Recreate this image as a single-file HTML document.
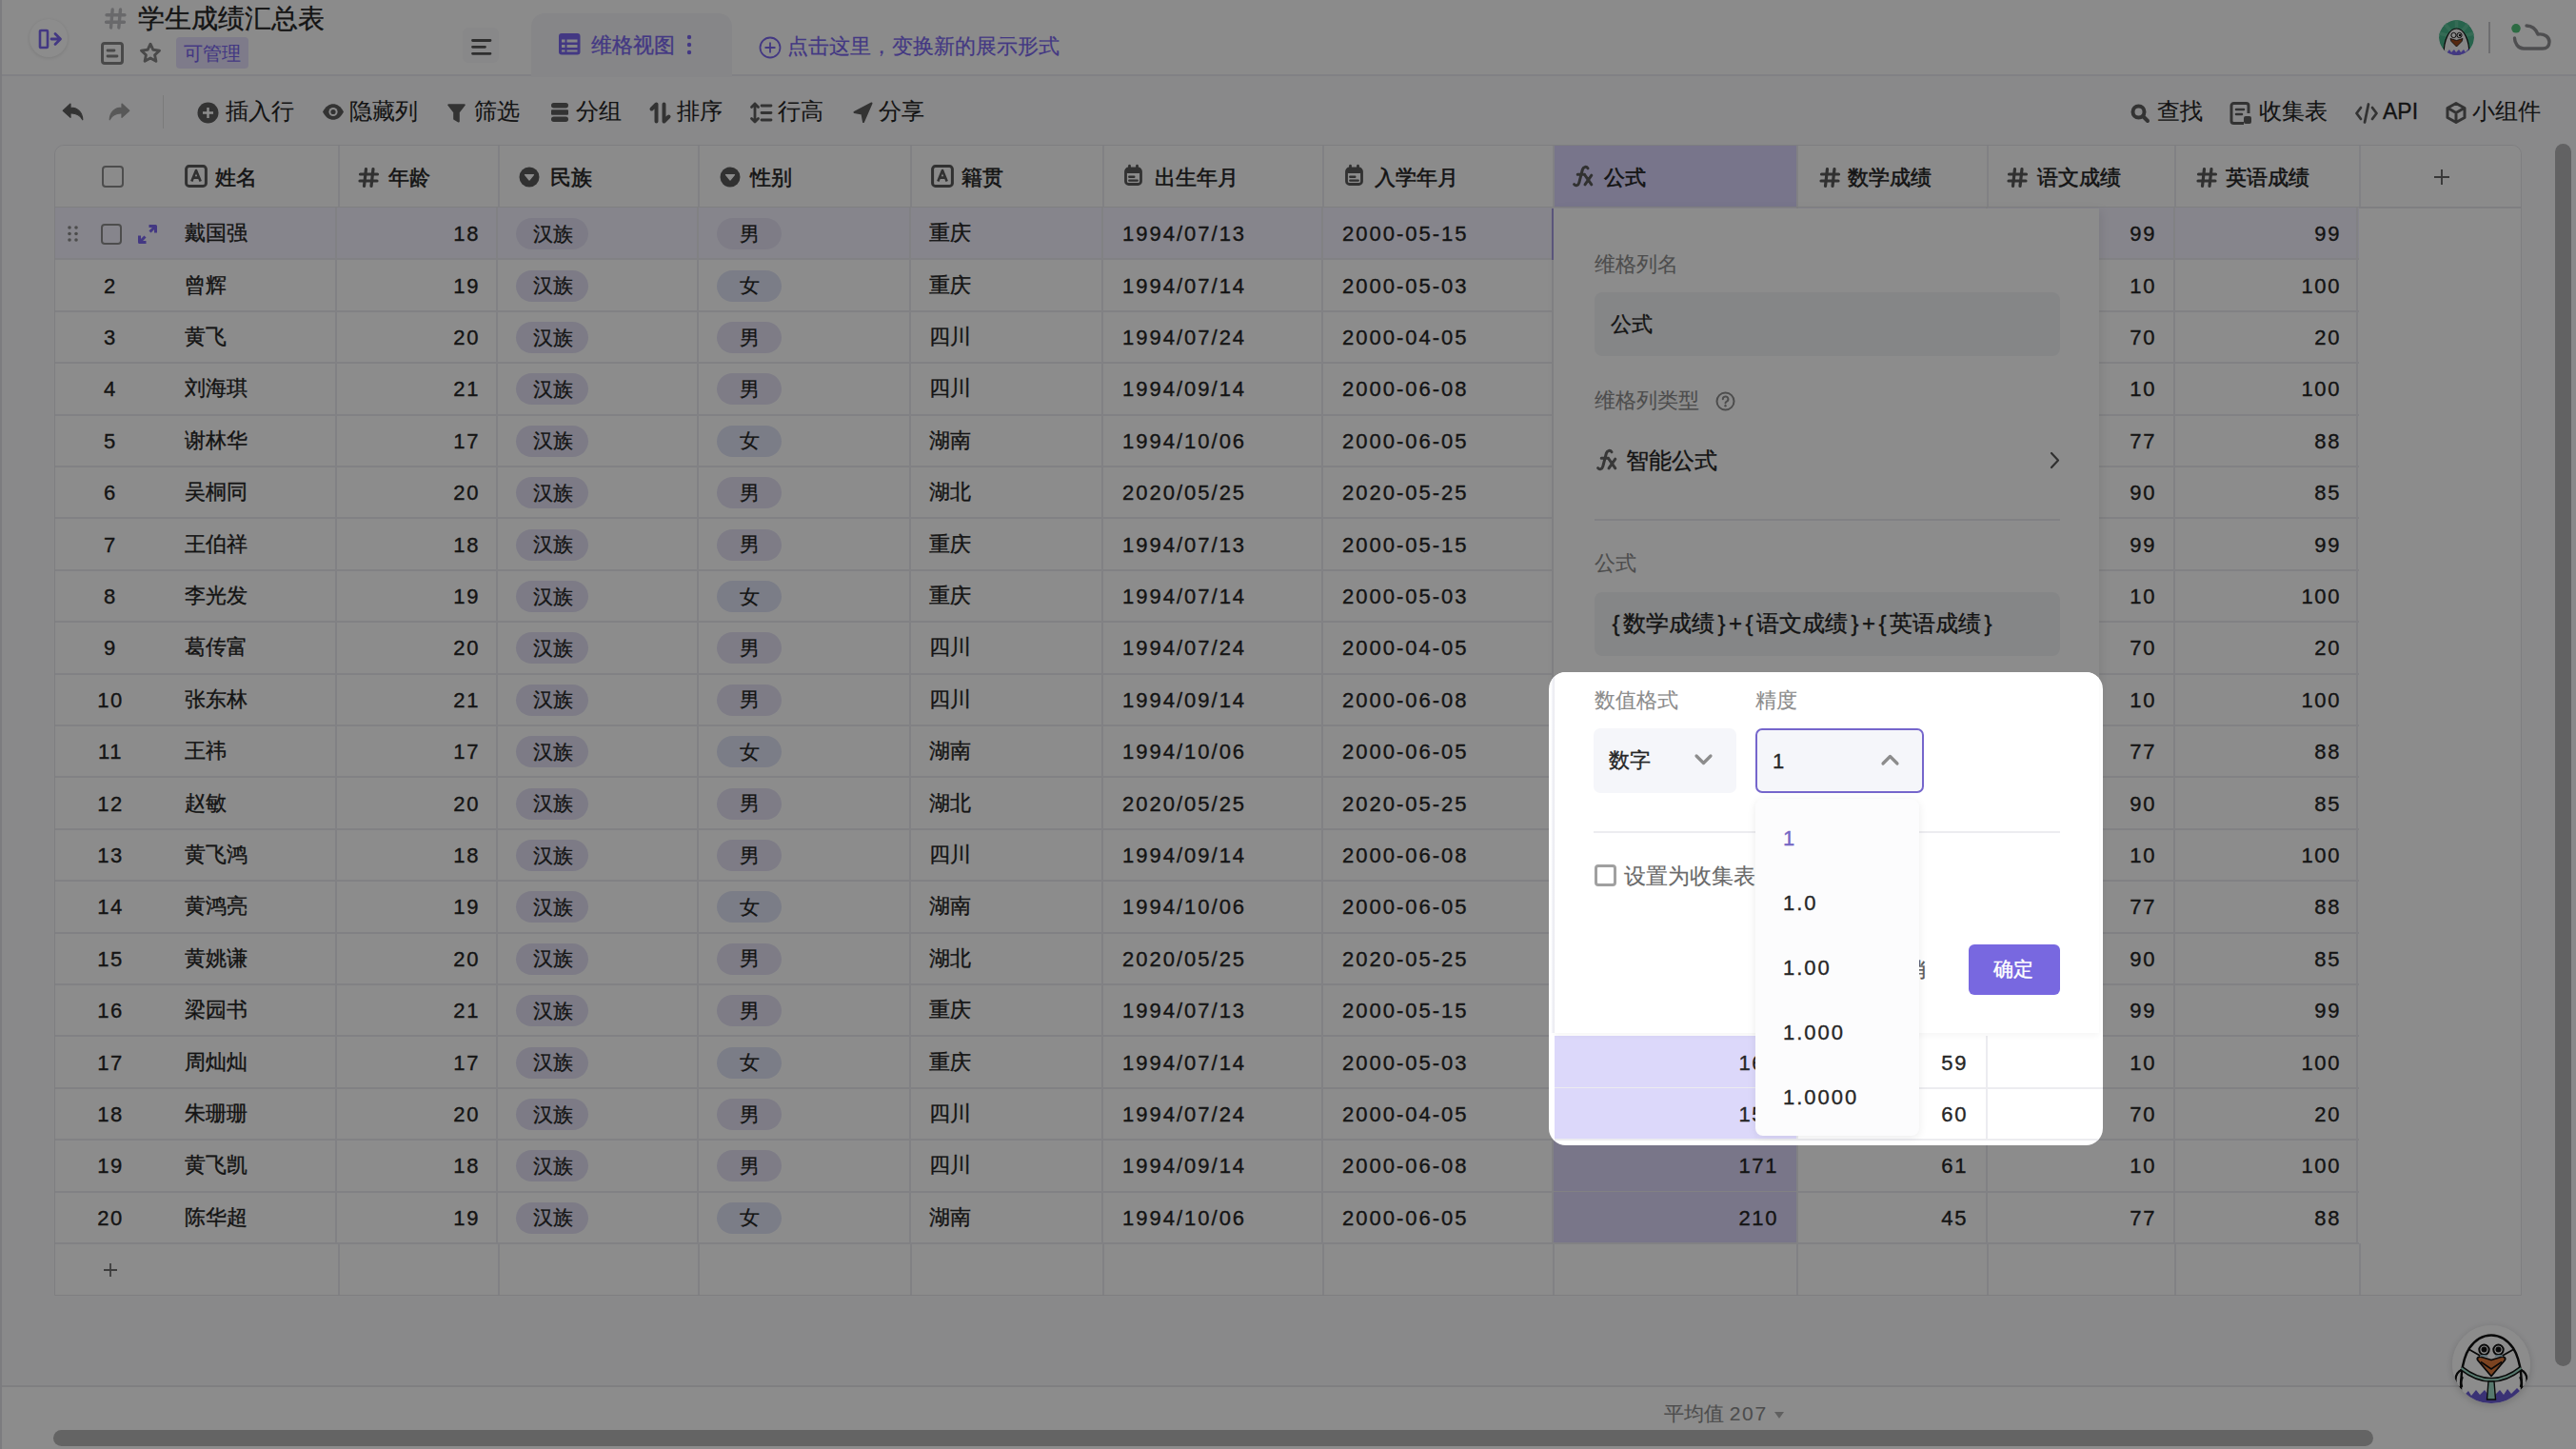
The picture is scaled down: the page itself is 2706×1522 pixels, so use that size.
<!DOCTYPE html><html><head><meta charset="utf-8"><style>
*{margin:0;padding:0;box-sizing:border-box}
html,body{width:2706px;height:1522px;overflow:hidden;background:#fafafc;font-family:"Liberation Sans",sans-serif;color:#262626}
.a{position:absolute}
.t{position:absolute;white-space:nowrap;line-height:1;-webkit-text-stroke-width:0.35px}
.num{letter-spacing:1.6px;transform:translateY(1.3px)}
.dt{letter-spacing:2.0px;transform:translateY(1.3px)}
.dd{letter-spacing:2.0px;transform:translateY(1.3px)}
.br{display:inline-block;width:15px;text-align:center}
.pl{display:inline-block;width:14px;text-align:center}
svg{position:absolute;overflow:visible}
</style></head><body>
<div class="a" style="left:0;top:0;width:2706px;height:80px;background:#fefefe;border-bottom:2px solid #ebebf0"></div>
<div class="a" style="left:0;top:0;width:2px;height:1522px;background:#e2e2e8"></div>
<div class="a" style="left:31px;top:20px;width:40px;height:40px;border-radius:50%;background:#fff;box-shadow:0 1px 4px rgba(0,0,0,.12)"></div>
<svg style="left:41px;top:31px" width="24" height="20" viewBox="0 0 24 20"><rect x="1" y="1" width="8" height="18" rx="1" fill="none" stroke="#7b67ee" stroke-width="2.6"/><path d="M13 10h9M17 4.5l5.5 5.5-5.5 5.5" fill="none" stroke="#7b67ee" stroke-width="2.8" stroke-linecap="round" stroke-linejoin="round"/></svg>
<svg style="left:110px;top:8px" width="23" height="23" viewBox="0 0 23 23"><path d="M8.2 2L6.5 21M16.5 2l-1.7 19M2 7.8h19M1.5 15.2h19" stroke="#c0c0c4" stroke-width="3.4" stroke-linecap="round"/></svg>
<div class="t" style="left:145px;top:5px;font-size:27.6px;line-height:30px;color:#262626;-webkit-text-stroke-width:0.35px">学生成绩汇总表</div>
<svg style="left:106px;top:44px" width="24" height="24" viewBox="0 0 24 24"><rect x="1.5" y="1.5" width="21" height="21" rx="2.5" fill="none" stroke="#858585" stroke-width="3"/><path d="M7 9h7M7 15h10" stroke="#858585" stroke-width="2.8" stroke-linecap="round"/></svg>
<svg style="left:146px;top:44px" width="24" height="24" viewBox="0 0 24 24"><path d="M12 2.2l2.9 6.1 6.6.8-4.9 4.6 1.3 6.6L12 17l-5.9 3.3 1.3-6.6-4.9-4.6 6.6-.8z" fill="none" stroke="#858585" stroke-width="2.9" stroke-linejoin="round"/></svg>
<div class="a" style="left:185px;top:39px;width:76px;height:33px;border-radius:4px;background:#e5e1fc"></div>
<div class="t" style="left:193px;top:44px;font-size:20px;line-height:24px;color:#7b67ee;-webkit-text-stroke-width:0.1px">可管理</div>
<div class="a" style="left:486px;top:29px;width:38px;height:37px;border-radius:6px;background:#f7f7f9"></div>
<svg style="left:495px;top:41px" width="22" height="17" viewBox="0 0 22 17"><path d="M1.5 1.5h18.5M1.5 8.3h13M1.5 15.3h18.5" stroke="#555" stroke-width="2.8" stroke-linecap="round"/></svg>
<div class="a" style="left:558px;top:14px;width:211px;height:67px;border-radius:14px 14px 0 0;background:#f4f4f8"></div>
<svg style="left:587px;top:35px" width="23" height="23" viewBox="0 0 23 23"><rect x="0" y="0" width="22.5" height="22.5" rx="3" fill="#7b67ee"/><g fill="#f4f4f8"><rect x="3" y="6.5" width="3.5" height="3"/><rect x="3" y="12" width="3.5" height="3"/><rect x="3" y="17.5" width="3.5" height="2"/><rect x="8.5" y="6.5" width="11" height="3"/><rect x="8.5" y="12" width="11" height="3"/><rect x="8.5" y="17.5" width="11" height="2"/></g></svg>
<div class="t" style="left:621px;top:36px;font-size:22px;line-height:24px;color:#7b67ee">维格视图</div>
<svg style="left:721px;top:36px" width="6" height="22" viewBox="0 0 6 22"><circle cx="3" cy="3" r="2.2" fill="#7b67ee"/><circle cx="3" cy="11" r="2.2" fill="#7b67ee"/><circle cx="3" cy="19" r="2.2" fill="#7b67ee"/></svg>
<svg style="left:797px;top:38px" width="24" height="24" viewBox="0 0 24 24"><circle cx="12" cy="12" r="10.5" fill="none" stroke="#7b67ee" stroke-width="1.8"/><path d="M12 6.5v11M6.5 12h11" stroke="#7b67ee" stroke-width="1.8"/></svg>
<div class="t" style="left:827px;top:37px;font-size:22.1px;line-height:24px;color:#7b67ee;-webkit-text-stroke-width:0.2px">点击这里，变换新的展示形式</div>
<svg style="left:2562px;top:21px" width="37" height="37" viewBox="0 0 37 37"><defs><clipPath id="avc"><circle cx="18.5" cy="18.5" r="18.5"/></clipPath></defs><g clip-path="url(#avc)"><circle cx="18.5" cy="18.5" r="18.5" fill="#48b58a"/><g stroke="#62c49c" stroke-width="3.5"><path d="M18.5 18.5L18.5 0M18.5 18.5L31 4M18.5 18.5L37 14M18.5 18.5L6 4M18.5 18.5L0 14"/></g><path d="M5 37C5 20 11 9 18.5 9S32 20 32 37z" fill="#f4f4f4" stroke="#111" stroke-width="1.2"/><path d="M3 37l3-5 2 3 3-4 2 3 3-3 2 3 3-3 2 3 3-3 2 3 3-4 2 3 3-2v7z" fill="#7b67ee"/><circle cx="15.5" cy="16" r="2.6" fill="#fff" stroke="#111" stroke-width="1"/><circle cx="21.5" cy="16" r="2.6" fill="#fff" stroke="#111" stroke-width="1"/><circle cx="22" cy="16" r="1.2" fill="#111"/><path d="M12 19.5l6.5 2 6.5-2 -1 3-5.5 5.5-5.5-5.5z" fill="#9b4a1c" stroke="#111" stroke-width="0.8"/></g></svg>
<div class="a" style="left:2614px;top:23px;width:2px;height:33px;background:#c8c8cc"></div>
<svg style="left:2636px;top:20px" width="46" height="36" viewBox="0 0 46 36"><path d="M18 7C24 7 28 11 30 16C37 15 42 19 42 24C42 28.5 39 31 35 31L15 31C9 31 5.5 25 5.5 20" fill="none" stroke="#8e8e92" stroke-width="3.4" stroke-linecap="round" stroke-linejoin="round"/><circle cx="7" cy="9.8" r="4.8" fill="#52c47a"/></svg>
<svg style="left:65px;top:108px" width="23" height="19" viewBox="0 0 23 19"><path d="M9 1L1.2 8.2 9 15.4V11c6.5-.3 10.2 1.8 12.8 6.8C21.5 9.5 16.5 5.2 9 5.2z" fill="#5e5e5e" stroke="#5e5e5e" stroke-width="1.2" stroke-linejoin="round"/></svg>
<svg style="left:114px;top:108px" width="23" height="19" viewBox="0 0 23 19"><path d="M14 1l7.8 7.2L14 15.4V11C7.5 10.7 3.8 12.8 1.2 17.8 1.5 9.5 6.5 5.2 14 5.2z" fill="#a0a0a0" stroke="#a0a0a0" stroke-width="1.2" stroke-linejoin="round"/></svg>
<div class="a" style="left:171px;top:100px;width:1px;height:35px;background:#e0e0e0"></div>
<svg style="left:207px;top:107px" width="23" height="23" viewBox="0 0 23 23"><circle cx="11.5" cy="11.5" r="11" fill="#5e5e5e"/><path d="M11.5 6v11M6 11.5h11" stroke="#fff" stroke-width="2.4"/></svg>
<div class="t" style="left:237px;top:104px;font-size:24px;line-height:26px;color:#262626;-webkit-text-stroke-width:0.12px">插入行</div>
<svg style="left:338px;top:108px" width="24" height="19" viewBox="0 0 24 19"><path d="M1 9.5C4 3.5 8 1.2 12 1.2s8 2.3 11 8.3C20 15.5 16 17.8 12 17.8S4 15.5 1 9.5z" fill="#5e5e5e"/><circle cx="12" cy="9.5" r="4.6" fill="#fafafc"/><circle cx="12" cy="9.5" r="2.6" fill="#5e5e5e"/></svg>
<div class="t" style="left:367px;top:104px;font-size:24px;line-height:26px;color:#262626;-webkit-text-stroke-width:0.12px">隐藏列</div>
<svg style="left:470px;top:109px" width="19" height="20" viewBox="0 0 19 20"><path d="M1.2 1.2h16.6l-6 7.6v9.8l-4.6-2.6V8.8z" fill="#5e5e5e" stroke="#5e5e5e" stroke-width="2" stroke-linejoin="round"/></svg>
<div class="t" style="left:498px;top:104px;font-size:24px;line-height:26px;color:#262626;-webkit-text-stroke-width:0.12px">筛选</div>
<svg style="left:579px;top:108px" width="18" height="20" viewBox="0 0 18 20"><rect x="0" y="0" width="18" height="5.5" rx="2.7" fill="#5e5e5e"/><rect x="0" y="7.2" width="18" height="5.5" rx="1" fill="#5e5e5e"/><rect x="0" y="14.5" width="18" height="5.5" rx="2.7" fill="#5e5e5e"/></svg>
<div class="t" style="left:605px;top:104px;font-size:24px;line-height:26px;color:#262626;-webkit-text-stroke-width:0.12px">分组</div>
<svg style="left:682px;top:108px" width="23" height="21" viewBox="0 0 23 21"><path d="M2.5 6.5l5-5v18M20.5 14.5l-5 5v-18" fill="none" stroke="#5e5e5e" stroke-width="4" stroke-linecap="round" stroke-linejoin="round"/></svg>
<div class="t" style="left:711px;top:104px;font-size:24px;line-height:26px;color:#262626;-webkit-text-stroke-width:0.12px">排序</div>
<svg style="left:788px;top:107px" width="23" height="23" viewBox="0 0 23 23"><path d="M5 2v19M1.5 5.5L5 2l3.5 3.5M1.5 17.5L5 21l3.5-3.5M12 4h10M12 11.5h10M12 19h10" fill="none" stroke="#5e5e5e" stroke-width="2.8" stroke-linecap="round" stroke-linejoin="round"/></svg>
<div class="t" style="left:817px;top:104px;font-size:24px;line-height:26px;color:#262626;-webkit-text-stroke-width:0.12px">行高</div>
<svg style="left:896px;top:107px" width="21" height="22" viewBox="0 0 21 22"><path d="M19.5 1.5L1.5 11l8 1.5 1.5 8.5z" fill="#5e5e5e" stroke="#5e5e5e" stroke-width="2" stroke-linejoin="round"/></svg>
<div class="t" style="left:923px;top:104px;font-size:24px;line-height:26px;color:#262626;-webkit-text-stroke-width:0.12px">分享</div>
<svg style="left:2238px;top:109px" width="20" height="20" viewBox="0 0 20 20"><circle cx="8.5" cy="8.5" r="6" fill="none" stroke="#5e5e5e" stroke-width="4"/><path d="M13 13l5 5" stroke="#5e5e5e" stroke-width="4" stroke-linecap="round"/></svg>
<div class="t" style="left:2266px;top:104px;font-size:24px;line-height:26px;color:#262626;-webkit-text-stroke-width:0.12px">查找</div>
<svg style="left:2342px;top:107px" width="24" height="24" viewBox="0 0 24 24"><path d="M20 12V4a2.5 2.5 0 0 0-2.5-2.5h-13A2.5 2.5 0 0 0 2 4v16a2.5 2.5 0 0 0 2.5 2.5H15" fill="none" stroke="#5e5e5e" stroke-width="3"/><path d="M7 8h8M7 13h6" stroke="#5e5e5e" stroke-width="2.6" stroke-linecap="round"/><rect x="15" y="15" width="8" height="8" rx="2" fill="#5e5e5e"/></svg>
<div class="t" style="left:2373px;top:104px;font-size:24px;line-height:26px;color:#262626;-webkit-text-stroke-width:0.12px">收集表</div>
<svg style="left:2474px;top:108px" width="24" height="22" viewBox="0 0 24 22"><path d="M6 5L1.5 11 6 17M18 5l4.5 6L18 17M14 1.5L10 20.5" fill="none" stroke="#5e5e5e" stroke-width="2.8" stroke-linecap="round" stroke-linejoin="round"/></svg>
<div class="t" style="left:2503px;top:105px;font-size:23px;line-height:24px;color:#262626;font-weight:400">API</div>
<svg style="left:2569px;top:107px" width="22" height="23" viewBox="0 0 22 23"><path d="M11 1.5l9 5v10l-9 5-9-5v-10z M2.5 6.5L11 11.5l8.5-5M11 11.5v10" fill="none" stroke="#5e5e5e" stroke-width="3" stroke-linejoin="round"/></svg>
<div class="t" style="left:2597px;top:104px;font-size:24px;line-height:26px;color:#262626;-webkit-text-stroke-width:0.12px">小组件</div>
<div class="a" style="left:57px;top:152px;width:2592px;height:1209px;background:#fff;border:1px solid #e6e6ea;border-radius:10px 10px 0 0"></div>
<div class="a" style="left:58px;top:153px;width:2590px;height:66px;background:#fdfdfd;border-radius:10px 10px 0 0"></div>
<div class="a" style="left:1632px;top:153px;width:256px;height:64px;background:#dad5fd"></div>
<div class="a" style="left:58px;top:217px;width:2590px;height:2px;background:#e8e8ec"></div>
<div class="a" style="left:355px;top:153px;width:2px;height:64px;background:#ececf0"></div>
<div class="a" style="left:523px;top:153px;width:2px;height:64px;background:#ececf0"></div>
<div class="a" style="left:733px;top:153px;width:2px;height:64px;background:#ececf0"></div>
<div class="a" style="left:956px;top:153px;width:2px;height:64px;background:#ececf0"></div>
<div class="a" style="left:1158px;top:153px;width:2px;height:64px;background:#ececf0"></div>
<div class="a" style="left:1389px;top:153px;width:2px;height:64px;background:#ececf0"></div>
<div class="a" style="left:1631px;top:153px;width:2px;height:64px;background:#ececf0"></div>
<div class="a" style="left:1887px;top:153px;width:2px;height:64px;background:#ececf0"></div>
<div class="a" style="left:2087px;top:153px;width:2px;height:64px;background:#ececf0"></div>
<div class="a" style="left:2284px;top:153px;width:2px;height:64px;background:#ececf0"></div>
<div class="a" style="left:2478px;top:153px;width:2px;height:64px;background:#ececf0"></div>
<div class="a" style="left:107px;top:174px;width:23px;height:23px;border:2.5px solid #8c8c8c;border-radius:4px"></div>
<svg style="left:194px;top:173px" width="24" height="24" viewBox="0 0 24 24"><rect x="1.6" y="1.6" width="20.8" height="20.8" rx="3" fill="none" stroke="#5a5a5a" stroke-width="3"/><path d="M7.3 17.5L12 6l4.7 11.5M8.9 13.6h6.2" fill="none" stroke="#5a5a5a" stroke-width="2.6" stroke-linejoin="round"/></svg>
<div class="t" style="left:226px;top:175px;font-size:22px;line-height:24px;-webkit-text-stroke:0.55px #262626;color:#262626">姓名</div>
<svg style="left:377px;top:176px" width="21" height="21" viewBox="0 0 21 21"><path d="M7.5 1.5L5.5 19.5M15 1.5l-2 18M1.5 7h18M1 14h18" stroke="#5a5a5a" stroke-width="3.2" stroke-linecap="round"/></svg>
<div class="t" style="left:408px;top:175px;font-size:22px;line-height:24px;-webkit-text-stroke:0.55px #262626;color:#262626">年龄</div>
<svg style="left:545px;top:175px" width="22" height="22" viewBox="0 0 22 22"><circle cx="11" cy="11" r="10.5" fill="#5a5a5a"/><path d="M6.5 8.5h9L11 14z" fill="#fdfdfd" stroke="#fdfdfd" stroke-width="1.2" stroke-linejoin="round"/></svg>
<div class="t" style="left:578px;top:175px;font-size:22px;line-height:24px;-webkit-text-stroke:0.55px #262626;color:#262626">民族</div>
<svg style="left:756px;top:175px" width="22" height="22" viewBox="0 0 22 22"><circle cx="11" cy="11" r="10.5" fill="#5a5a5a"/><path d="M6.5 8.5h9L11 14z" fill="#fdfdfd" stroke="#fdfdfd" stroke-width="1.2" stroke-linejoin="round"/></svg>
<div class="t" style="left:788px;top:175px;font-size:22px;line-height:24px;-webkit-text-stroke:0.55px #262626;color:#262626">性别</div>
<svg style="left:978px;top:173px" width="24" height="24" viewBox="0 0 24 24"><rect x="1.6" y="1.6" width="20.8" height="20.8" rx="3" fill="none" stroke="#5a5a5a" stroke-width="3"/><path d="M7.3 17.5L12 6l4.7 11.5M8.9 13.6h6.2" fill="none" stroke="#5a5a5a" stroke-width="2.6" stroke-linejoin="round"/></svg>
<div class="t" style="left:1010px;top:175px;font-size:22px;line-height:24px;-webkit-text-stroke:0.55px #262626;color:#262626">籍贯</div>
<svg style="left:1181px;top:173px" width="19" height="22" viewBox="0 0 19 22"><rect x="1.5" y="4" width="16" height="16.5" rx="3" fill="none" stroke="#5a5a5a" stroke-width="2.8"/><rect x="1.5" y="4" width="16" height="5" rx="2" fill="#5a5a5a"/><path d="M5.5 1.2v3.5M13.5 1.2v3.5" stroke="#5a5a5a" stroke-width="2.8" stroke-linecap="round"/><path d="M5.3 12.8h5M5.3 16.6h8.4" stroke="#5a5a5a" stroke-width="2.4" stroke-linecap="round"/></svg>
<div class="t" style="left:1213px;top:175px;font-size:22px;line-height:24px;-webkit-text-stroke:0.55px #262626;color:#262626">出生年月</div>
<svg style="left:1413px;top:173px" width="19" height="22" viewBox="0 0 19 22"><rect x="1.5" y="4" width="16" height="16.5" rx="3" fill="none" stroke="#5a5a5a" stroke-width="2.8"/><rect x="1.5" y="4" width="16" height="5" rx="2" fill="#5a5a5a"/><path d="M5.5 1.2v3.5M13.5 1.2v3.5" stroke="#5a5a5a" stroke-width="2.8" stroke-linecap="round"/><path d="M5.3 12.8h5M5.3 16.6h8.4" stroke="#5a5a5a" stroke-width="2.4" stroke-linecap="round"/></svg>
<div class="t" style="left:1444px;top:175px;font-size:22px;line-height:24px;-webkit-text-stroke:0.55px #262626;color:#262626">入学年月</div>
<svg style="left:1652px;top:173px" width="24" height="24" viewBox="0 0 24 24"><path d="M16 3.8C14.6 1.6 11.3 1.9 10.4 5L6.8 18.8C6 21.8 3.2 22.6 1.6 20.6M5.2 10.2H12.6M13 11.2l6.8 9.6M19.8 11.2l-6.8 9.6" fill="none" stroke="#5a5a5a" stroke-width="3" stroke-linecap="round"/></svg>
<div class="t" style="left:1685px;top:175px;font-size:22px;line-height:24px;-webkit-text-stroke:0.55px #262626;color:#262626">公式</div>
<svg style="left:1912px;top:176px" width="21" height="21" viewBox="0 0 21 21"><path d="M7.5 1.5L5.5 19.5M15 1.5l-2 18M1.5 7h18M1 14h18" stroke="#5a5a5a" stroke-width="3.2" stroke-linecap="round"/></svg>
<div class="t" style="left:1941px;top:175px;font-size:22px;line-height:24px;-webkit-text-stroke:0.55px #262626;color:#262626">数学成绩</div>
<svg style="left:2109px;top:176px" width="21" height="21" viewBox="0 0 21 21"><path d="M7.5 1.5L5.5 19.5M15 1.5l-2 18M1.5 7h18M1 14h18" stroke="#5a5a5a" stroke-width="3.2" stroke-linecap="round"/></svg>
<div class="t" style="left:2140px;top:175px;font-size:22px;line-height:24px;-webkit-text-stroke:0.55px #262626;color:#262626">语文成绩</div>
<svg style="left:2308px;top:176px" width="21" height="21" viewBox="0 0 21 21"><path d="M7.5 1.5L5.5 19.5M15 1.5l-2 18M1.5 7h18M1 14h18" stroke="#5a5a5a" stroke-width="3.2" stroke-linecap="round"/></svg>
<div class="t" style="left:2338px;top:175px;font-size:22px;line-height:24px;-webkit-text-stroke:0.55px #262626;color:#262626">英语成绩</div>
<svg style="left:2557px;top:178px" width="16" height="16" viewBox="0 0 16 16"><path d="M8 0v16M0 8h16" stroke="#666" stroke-width="1.9"/></svg>
<div class="a" style="left:58px;top:218.0px;width:2420px;height:54.4px;background:#f5f3ff"></div>
<div class="a" style="left:58px;top:271.4px;width:2420px;height:2px;background:#ececf0"></div>
<div class="a" style="left:352.0px;top:218.0px;width:2px;height:54.4px;background:#ececf0"></div>
<div class="a" style="left:521.0px;top:218.0px;width:2px;height:54.4px;background:#ececf0"></div>
<div class="a" style="left:731.5px;top:218.0px;width:2px;height:54.4px;background:#ececf0"></div>
<div class="a" style="left:955.0px;top:218.0px;width:2px;height:54.4px;background:#ececf0"></div>
<div class="a" style="left:1157.0px;top:218.0px;width:2px;height:54.4px;background:#ececf0"></div>
<div class="a" style="left:1388.0px;top:218.0px;width:2px;height:54.4px;background:#ececf0"></div>
<div class="a" style="left:1630.0px;top:218.0px;width:2px;height:54.4px;background:#ececf0"></div>
<div class="a" style="left:1887.0px;top:218.0px;width:2px;height:54.4px;background:#ececf0"></div>
<div class="a" style="left:2085.5px;top:218.0px;width:2px;height:54.4px;background:#ececf0"></div>
<div class="a" style="left:2283.0px;top:218.0px;width:2px;height:54.4px;background:#ececf0"></div>
<div class="a" style="left:2475.0px;top:218.0px;width:2px;height:54.4px;background:#ececf0"></div>
<svg style="left:71px;top:237px" width="11" height="17" viewBox="0 0 11 17"><g fill="#8c8c8c"><circle cx="2" cy="2" r="1.8"/><circle cx="9" cy="2" r="1.8"/><circle cx="2" cy="8.5" r="1.8"/><circle cx="9" cy="8.5" r="1.8"/><circle cx="2" cy="15" r="1.8"/><circle cx="9" cy="15" r="1.8"/></g></svg>
<div class="a" style="left:106px;top:235px;width:22px;height:22px;border:2.5px solid #8c8c8c;border-radius:4px"></div>
<svg style="left:145px;top:236px" width="20" height="20" viewBox="0 0 20 20"><path d="M11.5 1.5h7v7M18.5 1.5l-6 6M8.5 18.5h-7v-7M1.5 18.5l6-6" fill="none" stroke="#7b67ee" stroke-width="3" stroke-linejoin="round"/></svg>
<div class="t" style="left:194px;top:233.2px;font-size:22px;line-height:24px">戴国强</div>
<div class="t num" style="left:400px;top:233.2px;width:104px;text-align:right;font-size:22px;line-height:24px">18</div>
<div class="a" style="left:542px;top:229.2px;width:76px;height:33px;border-radius:17px;background:#e3e1f5"></div>
<div class="t" style="left:559.5px;top:233.7px;font-size:20.5px;line-height:24px;-webkit-text-stroke-width:0.25px">汉族</div>
<div class="a" style="left:753px;top:229.2px;width:68px;height:33px;border-radius:17px;background:#e5e2f5"></div>
<div class="t" style="left:777px;top:233.7px;font-size:20.5px;line-height:24px;-webkit-text-stroke-width:0.25px">男</div>
<div class="t" style="left:976px;top:233.2px;font-size:22px;line-height:24px">重庆</div>
<div class="t dt" style="left:1179px;top:233.2px;font-size:22px;line-height:24px">1994/07/13</div>
<div class="t dt" style="left:1410px;top:233.2px;font-size:22px;line-height:24px">2000-05-15</div>
<div class="t num" style="left:2100px;top:233.2px;width:165px;text-align:right;font-size:22px;line-height:24px">99</div>
<div class="t num" style="left:2290px;top:233.2px;width:169px;text-align:right;font-size:22px;line-height:24px">99</div>
<div class="a" style="left:58px;top:325.8px;width:2420px;height:2px;background:#ececf0"></div>
<div class="a" style="left:352.0px;top:272.4px;width:2px;height:54.4px;background:#ececf0"></div>
<div class="a" style="left:521.0px;top:272.4px;width:2px;height:54.4px;background:#ececf0"></div>
<div class="a" style="left:731.5px;top:272.4px;width:2px;height:54.4px;background:#ececf0"></div>
<div class="a" style="left:955.0px;top:272.4px;width:2px;height:54.4px;background:#ececf0"></div>
<div class="a" style="left:1157.0px;top:272.4px;width:2px;height:54.4px;background:#ececf0"></div>
<div class="a" style="left:1388.0px;top:272.4px;width:2px;height:54.4px;background:#ececf0"></div>
<div class="a" style="left:1630.0px;top:272.4px;width:2px;height:54.4px;background:#ececf0"></div>
<div class="a" style="left:1887.0px;top:272.4px;width:2px;height:54.4px;background:#ececf0"></div>
<div class="a" style="left:2085.5px;top:272.4px;width:2px;height:54.4px;background:#ececf0"></div>
<div class="a" style="left:2283.0px;top:272.4px;width:2px;height:54.4px;background:#ececf0"></div>
<div class="a" style="left:2475.0px;top:272.4px;width:2px;height:54.4px;background:#ececf0"></div>
<div class="t num" style="left:56px;top:287.6px;width:120px;text-align:center;font-size:22px;line-height:24px">2</div>
<div class="t" style="left:194px;top:287.6px;font-size:22px;line-height:24px">曾辉</div>
<div class="t num" style="left:400px;top:287.6px;width:104px;text-align:right;font-size:22px;line-height:24px">19</div>
<div class="a" style="left:542px;top:283.6px;width:76px;height:33px;border-radius:17px;background:#e3e1f5"></div>
<div class="t" style="left:559.5px;top:288.1px;font-size:20.5px;line-height:24px;-webkit-text-stroke-width:0.25px">汉族</div>
<div class="a" style="left:753px;top:283.6px;width:68px;height:33px;border-radius:17px;background:#e0e4f6"></div>
<div class="t" style="left:777px;top:288.1px;font-size:20.5px;line-height:24px;-webkit-text-stroke-width:0.25px">女</div>
<div class="t" style="left:976px;top:287.6px;font-size:22px;line-height:24px">重庆</div>
<div class="t dt" style="left:1179px;top:287.6px;font-size:22px;line-height:24px">1994/07/14</div>
<div class="t dt" style="left:1410px;top:287.6px;font-size:22px;line-height:24px">2000-05-03</div>
<div class="t num" style="left:2100px;top:287.6px;width:165px;text-align:right;font-size:22px;line-height:24px">10</div>
<div class="t num" style="left:2290px;top:287.6px;width:169px;text-align:right;font-size:22px;line-height:24px">100</div>
<div class="a" style="left:58px;top:380.2px;width:2420px;height:2px;background:#ececf0"></div>
<div class="a" style="left:352.0px;top:326.8px;width:2px;height:54.4px;background:#ececf0"></div>
<div class="a" style="left:521.0px;top:326.8px;width:2px;height:54.4px;background:#ececf0"></div>
<div class="a" style="left:731.5px;top:326.8px;width:2px;height:54.4px;background:#ececf0"></div>
<div class="a" style="left:955.0px;top:326.8px;width:2px;height:54.4px;background:#ececf0"></div>
<div class="a" style="left:1157.0px;top:326.8px;width:2px;height:54.4px;background:#ececf0"></div>
<div class="a" style="left:1388.0px;top:326.8px;width:2px;height:54.4px;background:#ececf0"></div>
<div class="a" style="left:1630.0px;top:326.8px;width:2px;height:54.4px;background:#ececf0"></div>
<div class="a" style="left:1887.0px;top:326.8px;width:2px;height:54.4px;background:#ececf0"></div>
<div class="a" style="left:2085.5px;top:326.8px;width:2px;height:54.4px;background:#ececf0"></div>
<div class="a" style="left:2283.0px;top:326.8px;width:2px;height:54.4px;background:#ececf0"></div>
<div class="a" style="left:2475.0px;top:326.8px;width:2px;height:54.4px;background:#ececf0"></div>
<div class="t num" style="left:56px;top:342.0px;width:120px;text-align:center;font-size:22px;line-height:24px">3</div>
<div class="t" style="left:194px;top:342.0px;font-size:22px;line-height:24px">黄飞</div>
<div class="t num" style="left:400px;top:342.0px;width:104px;text-align:right;font-size:22px;line-height:24px">20</div>
<div class="a" style="left:542px;top:338.0px;width:76px;height:33px;border-radius:17px;background:#e3e1f5"></div>
<div class="t" style="left:559.5px;top:342.5px;font-size:20.5px;line-height:24px;-webkit-text-stroke-width:0.25px">汉族</div>
<div class="a" style="left:753px;top:338.0px;width:68px;height:33px;border-radius:17px;background:#e5e2f5"></div>
<div class="t" style="left:777px;top:342.5px;font-size:20.5px;line-height:24px;-webkit-text-stroke-width:0.25px">男</div>
<div class="t" style="left:976px;top:342.0px;font-size:22px;line-height:24px">四川</div>
<div class="t dt" style="left:1179px;top:342.0px;font-size:22px;line-height:24px">1994/07/24</div>
<div class="t dt" style="left:1410px;top:342.0px;font-size:22px;line-height:24px">2000-04-05</div>
<div class="t num" style="left:2100px;top:342.0px;width:165px;text-align:right;font-size:22px;line-height:24px">70</div>
<div class="t num" style="left:2290px;top:342.0px;width:169px;text-align:right;font-size:22px;line-height:24px">20</div>
<div class="a" style="left:58px;top:434.6px;width:2420px;height:2px;background:#ececf0"></div>
<div class="a" style="left:352.0px;top:381.2px;width:2px;height:54.4px;background:#ececf0"></div>
<div class="a" style="left:521.0px;top:381.2px;width:2px;height:54.4px;background:#ececf0"></div>
<div class="a" style="left:731.5px;top:381.2px;width:2px;height:54.4px;background:#ececf0"></div>
<div class="a" style="left:955.0px;top:381.2px;width:2px;height:54.4px;background:#ececf0"></div>
<div class="a" style="left:1157.0px;top:381.2px;width:2px;height:54.4px;background:#ececf0"></div>
<div class="a" style="left:1388.0px;top:381.2px;width:2px;height:54.4px;background:#ececf0"></div>
<div class="a" style="left:1630.0px;top:381.2px;width:2px;height:54.4px;background:#ececf0"></div>
<div class="a" style="left:1887.0px;top:381.2px;width:2px;height:54.4px;background:#ececf0"></div>
<div class="a" style="left:2085.5px;top:381.2px;width:2px;height:54.4px;background:#ececf0"></div>
<div class="a" style="left:2283.0px;top:381.2px;width:2px;height:54.4px;background:#ececf0"></div>
<div class="a" style="left:2475.0px;top:381.2px;width:2px;height:54.4px;background:#ececf0"></div>
<div class="t num" style="left:56px;top:396.4px;width:120px;text-align:center;font-size:22px;line-height:24px">4</div>
<div class="t" style="left:194px;top:396.4px;font-size:22px;line-height:24px">刘海琪</div>
<div class="t num" style="left:400px;top:396.4px;width:104px;text-align:right;font-size:22px;line-height:24px">21</div>
<div class="a" style="left:542px;top:392.4px;width:76px;height:33px;border-radius:17px;background:#e3e1f5"></div>
<div class="t" style="left:559.5px;top:396.9px;font-size:20.5px;line-height:24px;-webkit-text-stroke-width:0.25px">汉族</div>
<div class="a" style="left:753px;top:392.4px;width:68px;height:33px;border-radius:17px;background:#e5e2f5"></div>
<div class="t" style="left:777px;top:396.9px;font-size:20.5px;line-height:24px;-webkit-text-stroke-width:0.25px">男</div>
<div class="t" style="left:976px;top:396.4px;font-size:22px;line-height:24px">四川</div>
<div class="t dt" style="left:1179px;top:396.4px;font-size:22px;line-height:24px">1994/09/14</div>
<div class="t dt" style="left:1410px;top:396.4px;font-size:22px;line-height:24px">2000-06-08</div>
<div class="t num" style="left:2100px;top:396.4px;width:165px;text-align:right;font-size:22px;line-height:24px">10</div>
<div class="t num" style="left:2290px;top:396.4px;width:169px;text-align:right;font-size:22px;line-height:24px">100</div>
<div class="a" style="left:58px;top:489.0px;width:2420px;height:2px;background:#ececf0"></div>
<div class="a" style="left:352.0px;top:435.6px;width:2px;height:54.4px;background:#ececf0"></div>
<div class="a" style="left:521.0px;top:435.6px;width:2px;height:54.4px;background:#ececf0"></div>
<div class="a" style="left:731.5px;top:435.6px;width:2px;height:54.4px;background:#ececf0"></div>
<div class="a" style="left:955.0px;top:435.6px;width:2px;height:54.4px;background:#ececf0"></div>
<div class="a" style="left:1157.0px;top:435.6px;width:2px;height:54.4px;background:#ececf0"></div>
<div class="a" style="left:1388.0px;top:435.6px;width:2px;height:54.4px;background:#ececf0"></div>
<div class="a" style="left:1630.0px;top:435.6px;width:2px;height:54.4px;background:#ececf0"></div>
<div class="a" style="left:1887.0px;top:435.6px;width:2px;height:54.4px;background:#ececf0"></div>
<div class="a" style="left:2085.5px;top:435.6px;width:2px;height:54.4px;background:#ececf0"></div>
<div class="a" style="left:2283.0px;top:435.6px;width:2px;height:54.4px;background:#ececf0"></div>
<div class="a" style="left:2475.0px;top:435.6px;width:2px;height:54.4px;background:#ececf0"></div>
<div class="t num" style="left:56px;top:450.8px;width:120px;text-align:center;font-size:22px;line-height:24px">5</div>
<div class="t" style="left:194px;top:450.8px;font-size:22px;line-height:24px">谢林华</div>
<div class="t num" style="left:400px;top:450.8px;width:104px;text-align:right;font-size:22px;line-height:24px">17</div>
<div class="a" style="left:542px;top:446.8px;width:76px;height:33px;border-radius:17px;background:#e3e1f5"></div>
<div class="t" style="left:559.5px;top:451.3px;font-size:20.5px;line-height:24px;-webkit-text-stroke-width:0.25px">汉族</div>
<div class="a" style="left:753px;top:446.8px;width:68px;height:33px;border-radius:17px;background:#e0e4f6"></div>
<div class="t" style="left:777px;top:451.3px;font-size:20.5px;line-height:24px;-webkit-text-stroke-width:0.25px">女</div>
<div class="t" style="left:976px;top:450.8px;font-size:22px;line-height:24px">湖南</div>
<div class="t dt" style="left:1179px;top:450.8px;font-size:22px;line-height:24px">1994/10/06</div>
<div class="t dt" style="left:1410px;top:450.8px;font-size:22px;line-height:24px">2000-06-05</div>
<div class="t num" style="left:2100px;top:450.8px;width:165px;text-align:right;font-size:22px;line-height:24px">77</div>
<div class="t num" style="left:2290px;top:450.8px;width:169px;text-align:right;font-size:22px;line-height:24px">88</div>
<div class="a" style="left:58px;top:543.4px;width:2420px;height:2px;background:#ececf0"></div>
<div class="a" style="left:352.0px;top:490.0px;width:2px;height:54.4px;background:#ececf0"></div>
<div class="a" style="left:521.0px;top:490.0px;width:2px;height:54.4px;background:#ececf0"></div>
<div class="a" style="left:731.5px;top:490.0px;width:2px;height:54.4px;background:#ececf0"></div>
<div class="a" style="left:955.0px;top:490.0px;width:2px;height:54.4px;background:#ececf0"></div>
<div class="a" style="left:1157.0px;top:490.0px;width:2px;height:54.4px;background:#ececf0"></div>
<div class="a" style="left:1388.0px;top:490.0px;width:2px;height:54.4px;background:#ececf0"></div>
<div class="a" style="left:1630.0px;top:490.0px;width:2px;height:54.4px;background:#ececf0"></div>
<div class="a" style="left:1887.0px;top:490.0px;width:2px;height:54.4px;background:#ececf0"></div>
<div class="a" style="left:2085.5px;top:490.0px;width:2px;height:54.4px;background:#ececf0"></div>
<div class="a" style="left:2283.0px;top:490.0px;width:2px;height:54.4px;background:#ececf0"></div>
<div class="a" style="left:2475.0px;top:490.0px;width:2px;height:54.4px;background:#ececf0"></div>
<div class="t num" style="left:56px;top:505.2px;width:120px;text-align:center;font-size:22px;line-height:24px">6</div>
<div class="t" style="left:194px;top:505.2px;font-size:22px;line-height:24px">吴桐同</div>
<div class="t num" style="left:400px;top:505.2px;width:104px;text-align:right;font-size:22px;line-height:24px">20</div>
<div class="a" style="left:542px;top:501.2px;width:76px;height:33px;border-radius:17px;background:#e3e1f5"></div>
<div class="t" style="left:559.5px;top:505.7px;font-size:20.5px;line-height:24px;-webkit-text-stroke-width:0.25px">汉族</div>
<div class="a" style="left:753px;top:501.2px;width:68px;height:33px;border-radius:17px;background:#e5e2f5"></div>
<div class="t" style="left:777px;top:505.7px;font-size:20.5px;line-height:24px;-webkit-text-stroke-width:0.25px">男</div>
<div class="t" style="left:976px;top:505.2px;font-size:22px;line-height:24px">湖北</div>
<div class="t dt" style="left:1179px;top:505.2px;font-size:22px;line-height:24px">2020/05/25</div>
<div class="t dt" style="left:1410px;top:505.2px;font-size:22px;line-height:24px">2020-05-25</div>
<div class="t num" style="left:2100px;top:505.2px;width:165px;text-align:right;font-size:22px;line-height:24px">90</div>
<div class="t num" style="left:2290px;top:505.2px;width:169px;text-align:right;font-size:22px;line-height:24px">85</div>
<div class="a" style="left:58px;top:597.8px;width:2420px;height:2px;background:#ececf0"></div>
<div class="a" style="left:352.0px;top:544.4px;width:2px;height:54.4px;background:#ececf0"></div>
<div class="a" style="left:521.0px;top:544.4px;width:2px;height:54.4px;background:#ececf0"></div>
<div class="a" style="left:731.5px;top:544.4px;width:2px;height:54.4px;background:#ececf0"></div>
<div class="a" style="left:955.0px;top:544.4px;width:2px;height:54.4px;background:#ececf0"></div>
<div class="a" style="left:1157.0px;top:544.4px;width:2px;height:54.4px;background:#ececf0"></div>
<div class="a" style="left:1388.0px;top:544.4px;width:2px;height:54.4px;background:#ececf0"></div>
<div class="a" style="left:1630.0px;top:544.4px;width:2px;height:54.4px;background:#ececf0"></div>
<div class="a" style="left:1887.0px;top:544.4px;width:2px;height:54.4px;background:#ececf0"></div>
<div class="a" style="left:2085.5px;top:544.4px;width:2px;height:54.4px;background:#ececf0"></div>
<div class="a" style="left:2283.0px;top:544.4px;width:2px;height:54.4px;background:#ececf0"></div>
<div class="a" style="left:2475.0px;top:544.4px;width:2px;height:54.4px;background:#ececf0"></div>
<div class="t num" style="left:56px;top:559.6px;width:120px;text-align:center;font-size:22px;line-height:24px">7</div>
<div class="t" style="left:194px;top:559.6px;font-size:22px;line-height:24px">王伯祥</div>
<div class="t num" style="left:400px;top:559.6px;width:104px;text-align:right;font-size:22px;line-height:24px">18</div>
<div class="a" style="left:542px;top:555.6px;width:76px;height:33px;border-radius:17px;background:#e3e1f5"></div>
<div class="t" style="left:559.5px;top:560.1px;font-size:20.5px;line-height:24px;-webkit-text-stroke-width:0.25px">汉族</div>
<div class="a" style="left:753px;top:555.6px;width:68px;height:33px;border-radius:17px;background:#e5e2f5"></div>
<div class="t" style="left:777px;top:560.1px;font-size:20.5px;line-height:24px;-webkit-text-stroke-width:0.25px">男</div>
<div class="t" style="left:976px;top:559.6px;font-size:22px;line-height:24px">重庆</div>
<div class="t dt" style="left:1179px;top:559.6px;font-size:22px;line-height:24px">1994/07/13</div>
<div class="t dt" style="left:1410px;top:559.6px;font-size:22px;line-height:24px">2000-05-15</div>
<div class="t num" style="left:2100px;top:559.6px;width:165px;text-align:right;font-size:22px;line-height:24px">99</div>
<div class="t num" style="left:2290px;top:559.6px;width:169px;text-align:right;font-size:22px;line-height:24px">99</div>
<div class="a" style="left:58px;top:652.2px;width:2420px;height:2px;background:#ececf0"></div>
<div class="a" style="left:352.0px;top:598.8px;width:2px;height:54.4px;background:#ececf0"></div>
<div class="a" style="left:521.0px;top:598.8px;width:2px;height:54.4px;background:#ececf0"></div>
<div class="a" style="left:731.5px;top:598.8px;width:2px;height:54.4px;background:#ececf0"></div>
<div class="a" style="left:955.0px;top:598.8px;width:2px;height:54.4px;background:#ececf0"></div>
<div class="a" style="left:1157.0px;top:598.8px;width:2px;height:54.4px;background:#ececf0"></div>
<div class="a" style="left:1388.0px;top:598.8px;width:2px;height:54.4px;background:#ececf0"></div>
<div class="a" style="left:1630.0px;top:598.8px;width:2px;height:54.4px;background:#ececf0"></div>
<div class="a" style="left:1887.0px;top:598.8px;width:2px;height:54.4px;background:#ececf0"></div>
<div class="a" style="left:2085.5px;top:598.8px;width:2px;height:54.4px;background:#ececf0"></div>
<div class="a" style="left:2283.0px;top:598.8px;width:2px;height:54.4px;background:#ececf0"></div>
<div class="a" style="left:2475.0px;top:598.8px;width:2px;height:54.4px;background:#ececf0"></div>
<div class="t num" style="left:56px;top:614.0px;width:120px;text-align:center;font-size:22px;line-height:24px">8</div>
<div class="t" style="left:194px;top:614.0px;font-size:22px;line-height:24px">李光发</div>
<div class="t num" style="left:400px;top:614.0px;width:104px;text-align:right;font-size:22px;line-height:24px">19</div>
<div class="a" style="left:542px;top:610.0px;width:76px;height:33px;border-radius:17px;background:#e3e1f5"></div>
<div class="t" style="left:559.5px;top:614.5px;font-size:20.5px;line-height:24px;-webkit-text-stroke-width:0.25px">汉族</div>
<div class="a" style="left:753px;top:610.0px;width:68px;height:33px;border-radius:17px;background:#e0e4f6"></div>
<div class="t" style="left:777px;top:614.5px;font-size:20.5px;line-height:24px;-webkit-text-stroke-width:0.25px">女</div>
<div class="t" style="left:976px;top:614.0px;font-size:22px;line-height:24px">重庆</div>
<div class="t dt" style="left:1179px;top:614.0px;font-size:22px;line-height:24px">1994/07/14</div>
<div class="t dt" style="left:1410px;top:614.0px;font-size:22px;line-height:24px">2000-05-03</div>
<div class="t num" style="left:2100px;top:614.0px;width:165px;text-align:right;font-size:22px;line-height:24px">10</div>
<div class="t num" style="left:2290px;top:614.0px;width:169px;text-align:right;font-size:22px;line-height:24px">100</div>
<div class="a" style="left:58px;top:706.6px;width:2420px;height:2px;background:#ececf0"></div>
<div class="a" style="left:352.0px;top:653.2px;width:2px;height:54.4px;background:#ececf0"></div>
<div class="a" style="left:521.0px;top:653.2px;width:2px;height:54.4px;background:#ececf0"></div>
<div class="a" style="left:731.5px;top:653.2px;width:2px;height:54.4px;background:#ececf0"></div>
<div class="a" style="left:955.0px;top:653.2px;width:2px;height:54.4px;background:#ececf0"></div>
<div class="a" style="left:1157.0px;top:653.2px;width:2px;height:54.4px;background:#ececf0"></div>
<div class="a" style="left:1388.0px;top:653.2px;width:2px;height:54.4px;background:#ececf0"></div>
<div class="a" style="left:1630.0px;top:653.2px;width:2px;height:54.4px;background:#ececf0"></div>
<div class="a" style="left:1887.0px;top:653.2px;width:2px;height:54.4px;background:#ececf0"></div>
<div class="a" style="left:2085.5px;top:653.2px;width:2px;height:54.4px;background:#ececf0"></div>
<div class="a" style="left:2283.0px;top:653.2px;width:2px;height:54.4px;background:#ececf0"></div>
<div class="a" style="left:2475.0px;top:653.2px;width:2px;height:54.4px;background:#ececf0"></div>
<div class="t num" style="left:56px;top:668.4px;width:120px;text-align:center;font-size:22px;line-height:24px">9</div>
<div class="t" style="left:194px;top:668.4px;font-size:22px;line-height:24px">葛传富</div>
<div class="t num" style="left:400px;top:668.4px;width:104px;text-align:right;font-size:22px;line-height:24px">20</div>
<div class="a" style="left:542px;top:664.4px;width:76px;height:33px;border-radius:17px;background:#e3e1f5"></div>
<div class="t" style="left:559.5px;top:668.9px;font-size:20.5px;line-height:24px;-webkit-text-stroke-width:0.25px">汉族</div>
<div class="a" style="left:753px;top:664.4px;width:68px;height:33px;border-radius:17px;background:#e5e2f5"></div>
<div class="t" style="left:777px;top:668.9px;font-size:20.5px;line-height:24px;-webkit-text-stroke-width:0.25px">男</div>
<div class="t" style="left:976px;top:668.4px;font-size:22px;line-height:24px">四川</div>
<div class="t dt" style="left:1179px;top:668.4px;font-size:22px;line-height:24px">1994/07/24</div>
<div class="t dt" style="left:1410px;top:668.4px;font-size:22px;line-height:24px">2000-04-05</div>
<div class="t num" style="left:2100px;top:668.4px;width:165px;text-align:right;font-size:22px;line-height:24px">70</div>
<div class="t num" style="left:2290px;top:668.4px;width:169px;text-align:right;font-size:22px;line-height:24px">20</div>
<div class="a" style="left:58px;top:761.0px;width:2420px;height:2px;background:#ececf0"></div>
<div class="a" style="left:352.0px;top:707.6px;width:2px;height:54.4px;background:#ececf0"></div>
<div class="a" style="left:521.0px;top:707.6px;width:2px;height:54.4px;background:#ececf0"></div>
<div class="a" style="left:731.5px;top:707.6px;width:2px;height:54.4px;background:#ececf0"></div>
<div class="a" style="left:955.0px;top:707.6px;width:2px;height:54.4px;background:#ececf0"></div>
<div class="a" style="left:1157.0px;top:707.6px;width:2px;height:54.4px;background:#ececf0"></div>
<div class="a" style="left:1388.0px;top:707.6px;width:2px;height:54.4px;background:#ececf0"></div>
<div class="a" style="left:1630.0px;top:707.6px;width:2px;height:54.4px;background:#ececf0"></div>
<div class="a" style="left:1887.0px;top:707.6px;width:2px;height:54.4px;background:#ececf0"></div>
<div class="a" style="left:2085.5px;top:707.6px;width:2px;height:54.4px;background:#ececf0"></div>
<div class="a" style="left:2283.0px;top:707.6px;width:2px;height:54.4px;background:#ececf0"></div>
<div class="a" style="left:2475.0px;top:707.6px;width:2px;height:54.4px;background:#ececf0"></div>
<div class="t num" style="left:56px;top:722.8px;width:120px;text-align:center;font-size:22px;line-height:24px">10</div>
<div class="t" style="left:194px;top:722.8px;font-size:22px;line-height:24px">张东林</div>
<div class="t num" style="left:400px;top:722.8px;width:104px;text-align:right;font-size:22px;line-height:24px">21</div>
<div class="a" style="left:542px;top:718.8px;width:76px;height:33px;border-radius:17px;background:#e3e1f5"></div>
<div class="t" style="left:559.5px;top:723.3px;font-size:20.5px;line-height:24px;-webkit-text-stroke-width:0.25px">汉族</div>
<div class="a" style="left:753px;top:718.8px;width:68px;height:33px;border-radius:17px;background:#e5e2f5"></div>
<div class="t" style="left:777px;top:723.3px;font-size:20.5px;line-height:24px;-webkit-text-stroke-width:0.25px">男</div>
<div class="t" style="left:976px;top:722.8px;font-size:22px;line-height:24px">四川</div>
<div class="t dt" style="left:1179px;top:722.8px;font-size:22px;line-height:24px">1994/09/14</div>
<div class="t dt" style="left:1410px;top:722.8px;font-size:22px;line-height:24px">2000-06-08</div>
<div class="t num" style="left:2100px;top:722.8px;width:165px;text-align:right;font-size:22px;line-height:24px">10</div>
<div class="t num" style="left:2290px;top:722.8px;width:169px;text-align:right;font-size:22px;line-height:24px">100</div>
<div class="a" style="left:58px;top:815.4px;width:2420px;height:2px;background:#ececf0"></div>
<div class="a" style="left:352.0px;top:762.0px;width:2px;height:54.4px;background:#ececf0"></div>
<div class="a" style="left:521.0px;top:762.0px;width:2px;height:54.4px;background:#ececf0"></div>
<div class="a" style="left:731.5px;top:762.0px;width:2px;height:54.4px;background:#ececf0"></div>
<div class="a" style="left:955.0px;top:762.0px;width:2px;height:54.4px;background:#ececf0"></div>
<div class="a" style="left:1157.0px;top:762.0px;width:2px;height:54.4px;background:#ececf0"></div>
<div class="a" style="left:1388.0px;top:762.0px;width:2px;height:54.4px;background:#ececf0"></div>
<div class="a" style="left:1630.0px;top:762.0px;width:2px;height:54.4px;background:#ececf0"></div>
<div class="a" style="left:1887.0px;top:762.0px;width:2px;height:54.4px;background:#ececf0"></div>
<div class="a" style="left:2085.5px;top:762.0px;width:2px;height:54.4px;background:#ececf0"></div>
<div class="a" style="left:2283.0px;top:762.0px;width:2px;height:54.4px;background:#ececf0"></div>
<div class="a" style="left:2475.0px;top:762.0px;width:2px;height:54.4px;background:#ececf0"></div>
<div class="t num" style="left:56px;top:777.2px;width:120px;text-align:center;font-size:22px;line-height:24px">11</div>
<div class="t" style="left:194px;top:777.2px;font-size:22px;line-height:24px">王祎</div>
<div class="t num" style="left:400px;top:777.2px;width:104px;text-align:right;font-size:22px;line-height:24px">17</div>
<div class="a" style="left:542px;top:773.2px;width:76px;height:33px;border-radius:17px;background:#e3e1f5"></div>
<div class="t" style="left:559.5px;top:777.7px;font-size:20.5px;line-height:24px;-webkit-text-stroke-width:0.25px">汉族</div>
<div class="a" style="left:753px;top:773.2px;width:68px;height:33px;border-radius:17px;background:#e0e4f6"></div>
<div class="t" style="left:777px;top:777.7px;font-size:20.5px;line-height:24px;-webkit-text-stroke-width:0.25px">女</div>
<div class="t" style="left:976px;top:777.2px;font-size:22px;line-height:24px">湖南</div>
<div class="t dt" style="left:1179px;top:777.2px;font-size:22px;line-height:24px">1994/10/06</div>
<div class="t dt" style="left:1410px;top:777.2px;font-size:22px;line-height:24px">2000-06-05</div>
<div class="t num" style="left:2100px;top:777.2px;width:165px;text-align:right;font-size:22px;line-height:24px">77</div>
<div class="t num" style="left:2290px;top:777.2px;width:169px;text-align:right;font-size:22px;line-height:24px">88</div>
<div class="a" style="left:58px;top:869.8px;width:2420px;height:2px;background:#ececf0"></div>
<div class="a" style="left:352.0px;top:816.4px;width:2px;height:54.4px;background:#ececf0"></div>
<div class="a" style="left:521.0px;top:816.4px;width:2px;height:54.4px;background:#ececf0"></div>
<div class="a" style="left:731.5px;top:816.4px;width:2px;height:54.4px;background:#ececf0"></div>
<div class="a" style="left:955.0px;top:816.4px;width:2px;height:54.4px;background:#ececf0"></div>
<div class="a" style="left:1157.0px;top:816.4px;width:2px;height:54.4px;background:#ececf0"></div>
<div class="a" style="left:1388.0px;top:816.4px;width:2px;height:54.4px;background:#ececf0"></div>
<div class="a" style="left:1630.0px;top:816.4px;width:2px;height:54.4px;background:#ececf0"></div>
<div class="a" style="left:1887.0px;top:816.4px;width:2px;height:54.4px;background:#ececf0"></div>
<div class="a" style="left:2085.5px;top:816.4px;width:2px;height:54.4px;background:#ececf0"></div>
<div class="a" style="left:2283.0px;top:816.4px;width:2px;height:54.4px;background:#ececf0"></div>
<div class="a" style="left:2475.0px;top:816.4px;width:2px;height:54.4px;background:#ececf0"></div>
<div class="t num" style="left:56px;top:831.6px;width:120px;text-align:center;font-size:22px;line-height:24px">12</div>
<div class="t" style="left:194px;top:831.6px;font-size:22px;line-height:24px">赵敏</div>
<div class="t num" style="left:400px;top:831.6px;width:104px;text-align:right;font-size:22px;line-height:24px">20</div>
<div class="a" style="left:542px;top:827.6px;width:76px;height:33px;border-radius:17px;background:#e3e1f5"></div>
<div class="t" style="left:559.5px;top:832.1px;font-size:20.5px;line-height:24px;-webkit-text-stroke-width:0.25px">汉族</div>
<div class="a" style="left:753px;top:827.6px;width:68px;height:33px;border-radius:17px;background:#e5e2f5"></div>
<div class="t" style="left:777px;top:832.1px;font-size:20.5px;line-height:24px;-webkit-text-stroke-width:0.25px">男</div>
<div class="t" style="left:976px;top:831.6px;font-size:22px;line-height:24px">湖北</div>
<div class="t dt" style="left:1179px;top:831.6px;font-size:22px;line-height:24px">2020/05/25</div>
<div class="t dt" style="left:1410px;top:831.6px;font-size:22px;line-height:24px">2020-05-25</div>
<div class="t num" style="left:2100px;top:831.6px;width:165px;text-align:right;font-size:22px;line-height:24px">90</div>
<div class="t num" style="left:2290px;top:831.6px;width:169px;text-align:right;font-size:22px;line-height:24px">85</div>
<div class="a" style="left:58px;top:924.2px;width:2420px;height:2px;background:#ececf0"></div>
<div class="a" style="left:352.0px;top:870.8px;width:2px;height:54.4px;background:#ececf0"></div>
<div class="a" style="left:521.0px;top:870.8px;width:2px;height:54.4px;background:#ececf0"></div>
<div class="a" style="left:731.5px;top:870.8px;width:2px;height:54.4px;background:#ececf0"></div>
<div class="a" style="left:955.0px;top:870.8px;width:2px;height:54.4px;background:#ececf0"></div>
<div class="a" style="left:1157.0px;top:870.8px;width:2px;height:54.4px;background:#ececf0"></div>
<div class="a" style="left:1388.0px;top:870.8px;width:2px;height:54.4px;background:#ececf0"></div>
<div class="a" style="left:1630.0px;top:870.8px;width:2px;height:54.4px;background:#ececf0"></div>
<div class="a" style="left:1887.0px;top:870.8px;width:2px;height:54.4px;background:#ececf0"></div>
<div class="a" style="left:2085.5px;top:870.8px;width:2px;height:54.4px;background:#ececf0"></div>
<div class="a" style="left:2283.0px;top:870.8px;width:2px;height:54.4px;background:#ececf0"></div>
<div class="a" style="left:2475.0px;top:870.8px;width:2px;height:54.4px;background:#ececf0"></div>
<div class="t num" style="left:56px;top:886.0px;width:120px;text-align:center;font-size:22px;line-height:24px">13</div>
<div class="t" style="left:194px;top:886.0px;font-size:22px;line-height:24px">黄飞鸿</div>
<div class="t num" style="left:400px;top:886.0px;width:104px;text-align:right;font-size:22px;line-height:24px">18</div>
<div class="a" style="left:542px;top:882.0px;width:76px;height:33px;border-radius:17px;background:#e3e1f5"></div>
<div class="t" style="left:559.5px;top:886.5px;font-size:20.5px;line-height:24px;-webkit-text-stroke-width:0.25px">汉族</div>
<div class="a" style="left:753px;top:882.0px;width:68px;height:33px;border-radius:17px;background:#e5e2f5"></div>
<div class="t" style="left:777px;top:886.5px;font-size:20.5px;line-height:24px;-webkit-text-stroke-width:0.25px">男</div>
<div class="t" style="left:976px;top:886.0px;font-size:22px;line-height:24px">四川</div>
<div class="t dt" style="left:1179px;top:886.0px;font-size:22px;line-height:24px">1994/09/14</div>
<div class="t dt" style="left:1410px;top:886.0px;font-size:22px;line-height:24px">2000-06-08</div>
<div class="t num" style="left:2100px;top:886.0px;width:165px;text-align:right;font-size:22px;line-height:24px">10</div>
<div class="t num" style="left:2290px;top:886.0px;width:169px;text-align:right;font-size:22px;line-height:24px">100</div>
<div class="a" style="left:58px;top:978.6px;width:2420px;height:2px;background:#ececf0"></div>
<div class="a" style="left:352.0px;top:925.2px;width:2px;height:54.4px;background:#ececf0"></div>
<div class="a" style="left:521.0px;top:925.2px;width:2px;height:54.4px;background:#ececf0"></div>
<div class="a" style="left:731.5px;top:925.2px;width:2px;height:54.4px;background:#ececf0"></div>
<div class="a" style="left:955.0px;top:925.2px;width:2px;height:54.4px;background:#ececf0"></div>
<div class="a" style="left:1157.0px;top:925.2px;width:2px;height:54.4px;background:#ececf0"></div>
<div class="a" style="left:1388.0px;top:925.2px;width:2px;height:54.4px;background:#ececf0"></div>
<div class="a" style="left:1630.0px;top:925.2px;width:2px;height:54.4px;background:#ececf0"></div>
<div class="a" style="left:1887.0px;top:925.2px;width:2px;height:54.4px;background:#ececf0"></div>
<div class="a" style="left:2085.5px;top:925.2px;width:2px;height:54.4px;background:#ececf0"></div>
<div class="a" style="left:2283.0px;top:925.2px;width:2px;height:54.4px;background:#ececf0"></div>
<div class="a" style="left:2475.0px;top:925.2px;width:2px;height:54.4px;background:#ececf0"></div>
<div class="t num" style="left:56px;top:940.4px;width:120px;text-align:center;font-size:22px;line-height:24px">14</div>
<div class="t" style="left:194px;top:940.4px;font-size:22px;line-height:24px">黄鸿亮</div>
<div class="t num" style="left:400px;top:940.4px;width:104px;text-align:right;font-size:22px;line-height:24px">19</div>
<div class="a" style="left:542px;top:936.4px;width:76px;height:33px;border-radius:17px;background:#e3e1f5"></div>
<div class="t" style="left:559.5px;top:940.9px;font-size:20.5px;line-height:24px;-webkit-text-stroke-width:0.25px">汉族</div>
<div class="a" style="left:753px;top:936.4px;width:68px;height:33px;border-radius:17px;background:#e0e4f6"></div>
<div class="t" style="left:777px;top:940.9px;font-size:20.5px;line-height:24px;-webkit-text-stroke-width:0.25px">女</div>
<div class="t" style="left:976px;top:940.4px;font-size:22px;line-height:24px">湖南</div>
<div class="t dt" style="left:1179px;top:940.4px;font-size:22px;line-height:24px">1994/10/06</div>
<div class="t dt" style="left:1410px;top:940.4px;font-size:22px;line-height:24px">2000-06-05</div>
<div class="t num" style="left:2100px;top:940.4px;width:165px;text-align:right;font-size:22px;line-height:24px">77</div>
<div class="t num" style="left:2290px;top:940.4px;width:169px;text-align:right;font-size:22px;line-height:24px">88</div>
<div class="a" style="left:58px;top:1033.0px;width:2420px;height:2px;background:#ececf0"></div>
<div class="a" style="left:352.0px;top:979.6px;width:2px;height:54.4px;background:#ececf0"></div>
<div class="a" style="left:521.0px;top:979.6px;width:2px;height:54.4px;background:#ececf0"></div>
<div class="a" style="left:731.5px;top:979.6px;width:2px;height:54.4px;background:#ececf0"></div>
<div class="a" style="left:955.0px;top:979.6px;width:2px;height:54.4px;background:#ececf0"></div>
<div class="a" style="left:1157.0px;top:979.6px;width:2px;height:54.4px;background:#ececf0"></div>
<div class="a" style="left:1388.0px;top:979.6px;width:2px;height:54.4px;background:#ececf0"></div>
<div class="a" style="left:1630.0px;top:979.6px;width:2px;height:54.4px;background:#ececf0"></div>
<div class="a" style="left:1887.0px;top:979.6px;width:2px;height:54.4px;background:#ececf0"></div>
<div class="a" style="left:2085.5px;top:979.6px;width:2px;height:54.4px;background:#ececf0"></div>
<div class="a" style="left:2283.0px;top:979.6px;width:2px;height:54.4px;background:#ececf0"></div>
<div class="a" style="left:2475.0px;top:979.6px;width:2px;height:54.4px;background:#ececf0"></div>
<div class="t num" style="left:56px;top:994.8px;width:120px;text-align:center;font-size:22px;line-height:24px">15</div>
<div class="t" style="left:194px;top:994.8px;font-size:22px;line-height:24px">黄姚谦</div>
<div class="t num" style="left:400px;top:994.8px;width:104px;text-align:right;font-size:22px;line-height:24px">20</div>
<div class="a" style="left:542px;top:990.8px;width:76px;height:33px;border-radius:17px;background:#e3e1f5"></div>
<div class="t" style="left:559.5px;top:995.3px;font-size:20.5px;line-height:24px;-webkit-text-stroke-width:0.25px">汉族</div>
<div class="a" style="left:753px;top:990.8px;width:68px;height:33px;border-radius:17px;background:#e5e2f5"></div>
<div class="t" style="left:777px;top:995.3px;font-size:20.5px;line-height:24px;-webkit-text-stroke-width:0.25px">男</div>
<div class="t" style="left:976px;top:994.8px;font-size:22px;line-height:24px">湖北</div>
<div class="t dt" style="left:1179px;top:994.8px;font-size:22px;line-height:24px">2020/05/25</div>
<div class="t dt" style="left:1410px;top:994.8px;font-size:22px;line-height:24px">2020-05-25</div>
<div class="t num" style="left:2100px;top:994.8px;width:165px;text-align:right;font-size:22px;line-height:24px">90</div>
<div class="t num" style="left:2290px;top:994.8px;width:169px;text-align:right;font-size:22px;line-height:24px">85</div>
<div class="a" style="left:58px;top:1087.4px;width:2420px;height:2px;background:#ececf0"></div>
<div class="a" style="left:352.0px;top:1034.0px;width:2px;height:54.4px;background:#ececf0"></div>
<div class="a" style="left:521.0px;top:1034.0px;width:2px;height:54.4px;background:#ececf0"></div>
<div class="a" style="left:731.5px;top:1034.0px;width:2px;height:54.4px;background:#ececf0"></div>
<div class="a" style="left:955.0px;top:1034.0px;width:2px;height:54.4px;background:#ececf0"></div>
<div class="a" style="left:1157.0px;top:1034.0px;width:2px;height:54.4px;background:#ececf0"></div>
<div class="a" style="left:1388.0px;top:1034.0px;width:2px;height:54.4px;background:#ececf0"></div>
<div class="a" style="left:1630.0px;top:1034.0px;width:2px;height:54.4px;background:#ececf0"></div>
<div class="a" style="left:1887.0px;top:1034.0px;width:2px;height:54.4px;background:#ececf0"></div>
<div class="a" style="left:2085.5px;top:1034.0px;width:2px;height:54.4px;background:#ececf0"></div>
<div class="a" style="left:2283.0px;top:1034.0px;width:2px;height:54.4px;background:#ececf0"></div>
<div class="a" style="left:2475.0px;top:1034.0px;width:2px;height:54.4px;background:#ececf0"></div>
<div class="t num" style="left:56px;top:1049.2px;width:120px;text-align:center;font-size:22px;line-height:24px">16</div>
<div class="t" style="left:194px;top:1049.2px;font-size:22px;line-height:24px">梁园书</div>
<div class="t num" style="left:400px;top:1049.2px;width:104px;text-align:right;font-size:22px;line-height:24px">21</div>
<div class="a" style="left:542px;top:1045.2px;width:76px;height:33px;border-radius:17px;background:#e3e1f5"></div>
<div class="t" style="left:559.5px;top:1049.7px;font-size:20.5px;line-height:24px;-webkit-text-stroke-width:0.25px">汉族</div>
<div class="a" style="left:753px;top:1045.2px;width:68px;height:33px;border-radius:17px;background:#e5e2f5"></div>
<div class="t" style="left:777px;top:1049.7px;font-size:20.5px;line-height:24px;-webkit-text-stroke-width:0.25px">男</div>
<div class="t" style="left:976px;top:1049.2px;font-size:22px;line-height:24px">重庆</div>
<div class="t dt" style="left:1179px;top:1049.2px;font-size:22px;line-height:24px">1994/07/13</div>
<div class="t dt" style="left:1410px;top:1049.2px;font-size:22px;line-height:24px">2000-05-15</div>
<div class="t num" style="left:2100px;top:1049.2px;width:165px;text-align:right;font-size:22px;line-height:24px">99</div>
<div class="t num" style="left:2290px;top:1049.2px;width:169px;text-align:right;font-size:22px;line-height:24px">99</div>
<div class="a" style="left:1632px;top:1088.4px;width:256px;height:54.4px;background:#dcd8fa"></div>
<div class="a" style="left:58px;top:1141.8px;width:2420px;height:2px;background:#ececf0"></div>
<div class="a" style="left:352.0px;top:1088.4px;width:2px;height:54.4px;background:#ececf0"></div>
<div class="a" style="left:521.0px;top:1088.4px;width:2px;height:54.4px;background:#ececf0"></div>
<div class="a" style="left:731.5px;top:1088.4px;width:2px;height:54.4px;background:#ececf0"></div>
<div class="a" style="left:955.0px;top:1088.4px;width:2px;height:54.4px;background:#ececf0"></div>
<div class="a" style="left:1157.0px;top:1088.4px;width:2px;height:54.4px;background:#ececf0"></div>
<div class="a" style="left:1388.0px;top:1088.4px;width:2px;height:54.4px;background:#ececf0"></div>
<div class="a" style="left:1630.0px;top:1088.4px;width:2px;height:54.4px;background:#ececf0"></div>
<div class="a" style="left:1887.0px;top:1088.4px;width:2px;height:54.4px;background:#ececf0"></div>
<div class="a" style="left:2085.5px;top:1088.4px;width:2px;height:54.4px;background:#ececf0"></div>
<div class="a" style="left:2283.0px;top:1088.4px;width:2px;height:54.4px;background:#ececf0"></div>
<div class="a" style="left:2475.0px;top:1088.4px;width:2px;height:54.4px;background:#ececf0"></div>
<div class="t num" style="left:56px;top:1103.6px;width:120px;text-align:center;font-size:22px;line-height:24px">17</div>
<div class="t" style="left:194px;top:1103.6px;font-size:22px;line-height:24px">周灿灿</div>
<div class="t num" style="left:400px;top:1103.6px;width:104px;text-align:right;font-size:22px;line-height:24px">17</div>
<div class="a" style="left:542px;top:1099.6px;width:76px;height:33px;border-radius:17px;background:#e3e1f5"></div>
<div class="t" style="left:559.5px;top:1104.1px;font-size:20.5px;line-height:24px;-webkit-text-stroke-width:0.25px">汉族</div>
<div class="a" style="left:753px;top:1099.6px;width:68px;height:33px;border-radius:17px;background:#e0e4f6"></div>
<div class="t" style="left:777px;top:1104.1px;font-size:20.5px;line-height:24px;-webkit-text-stroke-width:0.25px">女</div>
<div class="t" style="left:976px;top:1103.6px;font-size:22px;line-height:24px">重庆</div>
<div class="t dt" style="left:1179px;top:1103.6px;font-size:22px;line-height:24px">1994/07/14</div>
<div class="t dt" style="left:1410px;top:1103.6px;font-size:22px;line-height:24px">2000-05-03</div>
<div class="t num" style="left:1700px;top:1103.6px;width:168px;text-align:right;font-size:22px;line-height:24px">169</div>
<div class="t num" style="left:1900px;top:1103.6px;width:167px;text-align:right;font-size:22px;line-height:24px">59</div>
<div class="t num" style="left:2100px;top:1103.6px;width:165px;text-align:right;font-size:22px;line-height:24px">10</div>
<div class="t num" style="left:2290px;top:1103.6px;width:169px;text-align:right;font-size:22px;line-height:24px">100</div>
<div class="a" style="left:1632px;top:1142.8px;width:256px;height:54.4px;background:#dcd8fa"></div>
<div class="a" style="left:58px;top:1196.2px;width:2420px;height:2px;background:#ececf0"></div>
<div class="a" style="left:352.0px;top:1142.8px;width:2px;height:54.4px;background:#ececf0"></div>
<div class="a" style="left:521.0px;top:1142.8px;width:2px;height:54.4px;background:#ececf0"></div>
<div class="a" style="left:731.5px;top:1142.8px;width:2px;height:54.4px;background:#ececf0"></div>
<div class="a" style="left:955.0px;top:1142.8px;width:2px;height:54.4px;background:#ececf0"></div>
<div class="a" style="left:1157.0px;top:1142.8px;width:2px;height:54.4px;background:#ececf0"></div>
<div class="a" style="left:1388.0px;top:1142.8px;width:2px;height:54.4px;background:#ececf0"></div>
<div class="a" style="left:1630.0px;top:1142.8px;width:2px;height:54.4px;background:#ececf0"></div>
<div class="a" style="left:1887.0px;top:1142.8px;width:2px;height:54.4px;background:#ececf0"></div>
<div class="a" style="left:2085.5px;top:1142.8px;width:2px;height:54.4px;background:#ececf0"></div>
<div class="a" style="left:2283.0px;top:1142.8px;width:2px;height:54.4px;background:#ececf0"></div>
<div class="a" style="left:2475.0px;top:1142.8px;width:2px;height:54.4px;background:#ececf0"></div>
<div class="t num" style="left:56px;top:1158.0px;width:120px;text-align:center;font-size:22px;line-height:24px">18</div>
<div class="t" style="left:194px;top:1158.0px;font-size:22px;line-height:24px">朱珊珊</div>
<div class="t num" style="left:400px;top:1158.0px;width:104px;text-align:right;font-size:22px;line-height:24px">20</div>
<div class="a" style="left:542px;top:1154.0px;width:76px;height:33px;border-radius:17px;background:#e3e1f5"></div>
<div class="t" style="left:559.5px;top:1158.5px;font-size:20.5px;line-height:24px;-webkit-text-stroke-width:0.25px">汉族</div>
<div class="a" style="left:753px;top:1154.0px;width:68px;height:33px;border-radius:17px;background:#e5e2f5"></div>
<div class="t" style="left:777px;top:1158.5px;font-size:20.5px;line-height:24px;-webkit-text-stroke-width:0.25px">男</div>
<div class="t" style="left:976px;top:1158.0px;font-size:22px;line-height:24px">四川</div>
<div class="t dt" style="left:1179px;top:1158.0px;font-size:22px;line-height:24px">1994/07/24</div>
<div class="t dt" style="left:1410px;top:1158.0px;font-size:22px;line-height:24px">2000-04-05</div>
<div class="t num" style="left:1700px;top:1158.0px;width:168px;text-align:right;font-size:22px;line-height:24px">150</div>
<div class="t num" style="left:1900px;top:1158.0px;width:167px;text-align:right;font-size:22px;line-height:24px">60</div>
<div class="t num" style="left:2100px;top:1158.0px;width:165px;text-align:right;font-size:22px;line-height:24px">70</div>
<div class="t num" style="left:2290px;top:1158.0px;width:169px;text-align:right;font-size:22px;line-height:24px">20</div>
<div class="a" style="left:1632px;top:1197.2px;width:256px;height:54.4px;background:#dcd8fa"></div>
<div class="a" style="left:58px;top:1250.6px;width:2420px;height:2px;background:#ececf0"></div>
<div class="a" style="left:352.0px;top:1197.2px;width:2px;height:54.4px;background:#ececf0"></div>
<div class="a" style="left:521.0px;top:1197.2px;width:2px;height:54.4px;background:#ececf0"></div>
<div class="a" style="left:731.5px;top:1197.2px;width:2px;height:54.4px;background:#ececf0"></div>
<div class="a" style="left:955.0px;top:1197.2px;width:2px;height:54.4px;background:#ececf0"></div>
<div class="a" style="left:1157.0px;top:1197.2px;width:2px;height:54.4px;background:#ececf0"></div>
<div class="a" style="left:1388.0px;top:1197.2px;width:2px;height:54.4px;background:#ececf0"></div>
<div class="a" style="left:1630.0px;top:1197.2px;width:2px;height:54.4px;background:#ececf0"></div>
<div class="a" style="left:1887.0px;top:1197.2px;width:2px;height:54.4px;background:#ececf0"></div>
<div class="a" style="left:2085.5px;top:1197.2px;width:2px;height:54.4px;background:#ececf0"></div>
<div class="a" style="left:2283.0px;top:1197.2px;width:2px;height:54.4px;background:#ececf0"></div>
<div class="a" style="left:2475.0px;top:1197.2px;width:2px;height:54.4px;background:#ececf0"></div>
<div class="t num" style="left:56px;top:1212.4px;width:120px;text-align:center;font-size:22px;line-height:24px">19</div>
<div class="t" style="left:194px;top:1212.4px;font-size:22px;line-height:24px">黄飞凯</div>
<div class="t num" style="left:400px;top:1212.4px;width:104px;text-align:right;font-size:22px;line-height:24px">18</div>
<div class="a" style="left:542px;top:1208.4px;width:76px;height:33px;border-radius:17px;background:#e3e1f5"></div>
<div class="t" style="left:559.5px;top:1212.9px;font-size:20.5px;line-height:24px;-webkit-text-stroke-width:0.25px">汉族</div>
<div class="a" style="left:753px;top:1208.4px;width:68px;height:33px;border-radius:17px;background:#e5e2f5"></div>
<div class="t" style="left:777px;top:1212.9px;font-size:20.5px;line-height:24px;-webkit-text-stroke-width:0.25px">男</div>
<div class="t" style="left:976px;top:1212.4px;font-size:22px;line-height:24px">四川</div>
<div class="t dt" style="left:1179px;top:1212.4px;font-size:22px;line-height:24px">1994/09/14</div>
<div class="t dt" style="left:1410px;top:1212.4px;font-size:22px;line-height:24px">2000-06-08</div>
<div class="t num" style="left:1700px;top:1212.4px;width:168px;text-align:right;font-size:22px;line-height:24px">171</div>
<div class="t num" style="left:1900px;top:1212.4px;width:167px;text-align:right;font-size:22px;line-height:24px">61</div>
<div class="t num" style="left:2100px;top:1212.4px;width:165px;text-align:right;font-size:22px;line-height:24px">10</div>
<div class="t num" style="left:2290px;top:1212.4px;width:169px;text-align:right;font-size:22px;line-height:24px">100</div>
<div class="a" style="left:1632px;top:1251.6px;width:256px;height:54.4px;background:#dcd8fa"></div>
<div class="a" style="left:58px;top:1305.0px;width:2420px;height:2px;background:#ececf0"></div>
<div class="a" style="left:352.0px;top:1251.6px;width:2px;height:54.4px;background:#ececf0"></div>
<div class="a" style="left:521.0px;top:1251.6px;width:2px;height:54.4px;background:#ececf0"></div>
<div class="a" style="left:731.5px;top:1251.6px;width:2px;height:54.4px;background:#ececf0"></div>
<div class="a" style="left:955.0px;top:1251.6px;width:2px;height:54.4px;background:#ececf0"></div>
<div class="a" style="left:1157.0px;top:1251.6px;width:2px;height:54.4px;background:#ececf0"></div>
<div class="a" style="left:1388.0px;top:1251.6px;width:2px;height:54.4px;background:#ececf0"></div>
<div class="a" style="left:1630.0px;top:1251.6px;width:2px;height:54.4px;background:#ececf0"></div>
<div class="a" style="left:1887.0px;top:1251.6px;width:2px;height:54.4px;background:#ececf0"></div>
<div class="a" style="left:2085.5px;top:1251.6px;width:2px;height:54.4px;background:#ececf0"></div>
<div class="a" style="left:2283.0px;top:1251.6px;width:2px;height:54.4px;background:#ececf0"></div>
<div class="a" style="left:2475.0px;top:1251.6px;width:2px;height:54.4px;background:#ececf0"></div>
<div class="t num" style="left:56px;top:1266.8px;width:120px;text-align:center;font-size:22px;line-height:24px">20</div>
<div class="t" style="left:194px;top:1266.8px;font-size:22px;line-height:24px">陈华超</div>
<div class="t num" style="left:400px;top:1266.8px;width:104px;text-align:right;font-size:22px;line-height:24px">19</div>
<div class="a" style="left:542px;top:1262.8px;width:76px;height:33px;border-radius:17px;background:#e3e1f5"></div>
<div class="t" style="left:559.5px;top:1267.3px;font-size:20.5px;line-height:24px;-webkit-text-stroke-width:0.25px">汉族</div>
<div class="a" style="left:753px;top:1262.8px;width:68px;height:33px;border-radius:17px;background:#e0e4f6"></div>
<div class="t" style="left:777px;top:1267.3px;font-size:20.5px;line-height:24px;-webkit-text-stroke-width:0.25px">女</div>
<div class="t" style="left:976px;top:1266.8px;font-size:22px;line-height:24px">湖南</div>
<div class="t dt" style="left:1179px;top:1266.8px;font-size:22px;line-height:24px">1994/10/06</div>
<div class="t dt" style="left:1410px;top:1266.8px;font-size:22px;line-height:24px">2000-06-05</div>
<div class="t num" style="left:1700px;top:1266.8px;width:168px;text-align:right;font-size:22px;line-height:24px">210</div>
<div class="t num" style="left:1900px;top:1266.8px;width:167px;text-align:right;font-size:22px;line-height:24px">45</div>
<div class="t num" style="left:2100px;top:1266.8px;width:165px;text-align:right;font-size:22px;line-height:24px">77</div>
<div class="t num" style="left:2290px;top:1266.8px;width:169px;text-align:right;font-size:22px;line-height:24px">88</div>
<div class="a" style="left:355.0px;top:1306.0px;width:2px;height:54.0px;background:#ececf0"></div>
<div class="a" style="left:523.0px;top:1306.0px;width:2px;height:54.0px;background:#ececf0"></div>
<div class="a" style="left:733.0px;top:1306.0px;width:2px;height:54.0px;background:#ececf0"></div>
<div class="a" style="left:956.0px;top:1306.0px;width:2px;height:54.0px;background:#ececf0"></div>
<div class="a" style="left:1158.0px;top:1306.0px;width:2px;height:54.0px;background:#ececf0"></div>
<div class="a" style="left:1389.0px;top:1306.0px;width:2px;height:54.0px;background:#ececf0"></div>
<div class="a" style="left:1631.0px;top:1306.0px;width:2px;height:54.0px;background:#ececf0"></div>
<div class="a" style="left:1887.0px;top:1306.0px;width:2px;height:54.0px;background:#ececf0"></div>
<div class="a" style="left:2087.0px;top:1306.0px;width:2px;height:54.0px;background:#ececf0"></div>
<div class="a" style="left:2284.0px;top:1306.0px;width:2px;height:54.0px;background:#ececf0"></div>
<div class="a" style="left:2478.0px;top:1306.0px;width:2px;height:54.0px;background:#ececf0"></div>
<svg style="left:109px;top:1327px" width="14" height="14" viewBox="0 0 14 14"><path d="M7 0v14M0 7h14" stroke="#707070" stroke-width="1.8"/></svg>
<div class="a" style="left:1632px;top:219px;width:573px;height:866px;background:#fff;box-shadow:3px 2px 10px rgba(0,0,0,.08)"></div>
<div class="t" style="left:1675px;top:266px;font-size:22px;line-height:24px;-webkit-text-stroke-width:0.1px;color:#8c8c8c">维格列名</div>
<div class="a" style="left:1675px;top:307px;width:489px;height:67px;border-radius:8px;background:#f3f4f6"></div>
<div class="t" style="left:1692px;top:329px;font-size:22px;line-height:24px;color:#262626">公式</div>
<div class="t" style="left:1675px;top:409px;font-size:22px;line-height:24px;-webkit-text-stroke-width:0.1px;color:#8c8c8c">维格列类型</div>
<svg style="left:1802px;top:411px" width="21" height="21" viewBox="0 0 21 21"><circle cx="10.5" cy="10.5" r="9" fill="none" stroke="#8c8c8c" stroke-width="2"/><path d="M7.8 8.3a2.8 2.8 0 1 1 3.8 2.6c-.8.3-1.1.8-1.1 1.6" fill="none" stroke="#8c8c8c" stroke-width="2" stroke-linecap="round"/><circle cx="10.5" cy="15.3" r="1.2" fill="#8c8c8c"/></svg>
<svg style="left:1677px;top:471px" width="24" height="24" viewBox="0 0 24 24"><path d="M16 3.8C14.6 1.6 11.3 1.9 10.4 5L6.8 18.8C6 21.8 3.2 22.6 1.6 20.6M5.2 10.2H12.6M13 11.2l6.8 9.6M19.8 11.2l-6.8 9.6" fill="none" stroke="#666" stroke-width="3" stroke-linecap="round"/></svg>
<div class="t" style="left:1708px;top:470px;font-size:24px;line-height:28px;color:#262626">智能公式</div>
<svg style="left:2153px;top:474px" width="11" height="19" viewBox="0 0 11 19"><path d="M2 2l7 7.5L2 17" fill="none" stroke="#595959" stroke-width="2.2" stroke-linecap="round" stroke-linejoin="round"/></svg>
<div class="a" style="left:1675px;top:545px;width:489px;height:2px;background:#ececf0"></div>
<div class="t" style="left:1675px;top:580px;font-size:22px;line-height:24px;-webkit-text-stroke-width:0.1px;color:#8c8c8c">公式</div>
<div class="a" style="left:1675px;top:622px;width:489px;height:67px;border-radius:8px;background:#f3f4f6"></div>
<div class="t" style="left:1690px;top:642px;font-size:24px;line-height:26px;color:#262626"><span class="br">{</span>数学成绩<span class="br">}</span><span class="pl">+</span><span class="br">{</span>语文成绩<span class="br">}</span><span class="pl">+</span><span class="br">{</span>英语成绩<span class="br">}</span></div>
<div class="a" style="left:1630px;top:219px;width:2px;height:54px;background:#a59be0"></div>
<div class="a" style="left:2px;top:1455px;width:2704px;height:67px;background:#fff;border-top:2px solid #e8e8ec"></div>
<div class="t" style="left:1748px;top:1473px;font-size:21px;line-height:24px;color:#8c8c8c;-webkit-text-stroke-width:0.1px">平均值 <span class="num">207</span></div>
<svg style="left:1864px;top:1483px" width="10" height="8" viewBox="0 0 10 8"><path d="M0 0h10L5 7z" fill="#b0b0b0"/></svg>
<div class="a" style="left:56px;top:1502px;width:2437px;height:17px;border-radius:9px;background:#b6b6b6"></div>
<div class="a" style="left:2684px;top:151px;width:17px;height:1284px;border-radius:9px;background:#b2b2b4"></div>
<div class="a" style="left:2576px;top:1392px;width:82px;height:82px;border-radius:50%;box-shadow:0 2px 8px rgba(0,0,0,.18)"></div>
<svg style="left:2576px;top:1392px" width="82" height="82" viewBox="0 0 82 82"><defs><clipPath id="msc"><circle cx="41" cy="41" r="41"/></clipPath></defs><circle cx="41" cy="41" r="41" fill="#fff"/><g clip-path="url(#msc)"><path d="M9.5 90C8 60 9 38 18 24C25 14 33 10.5 41 10.5S57 14 64 24C73 38 74 60 72.5 90z" fill="#fff" stroke="#111" stroke-width="2.4"/><path d="M10 76l7-7 3 5 5-6 4 5 5-5 3 4 4-3 4 4 5-5 4 5 4-6 4 5 6-6 3 3v20H10z" fill="#6a5cd6"/><path d="M10 47C2 50 1 64 8.5 66M10.5 55C9 58 9 62 10 64" fill="none" stroke="#111" stroke-width="2.4" stroke-linecap="round"/><path d="M72 47C80 50 81 64 73.5 66M71.5 55C73 58 73 62 72 64" fill="none" stroke="#111" stroke-width="2.4" stroke-linecap="round"/><path d="M9.5 45Q41 70 72.5 45" fill="none" stroke="#111" stroke-width="5"/><path d="M9.5 45Q41 70 72.5 45" fill="none" stroke="#9fdcc8" stroke-width="2.2"/><path d="M38 59h6l1.5 19h-9z" fill="#9fdcc8" stroke="#111" stroke-width="1.4"/><path d="M17 25L31 33M65 25L51 33" stroke="#111" stroke-width="1.8"/><path d="M27 37C25 34 28 32.5 31 33.5L41 36.5L51 33.5C54 32.5 57 34 55 37L41 53.5z" fill="#e07a3c" stroke="#111" stroke-width="1.8" stroke-linejoin="round"/><path d="M30 38.5L41 46L52 38.5" fill="none" stroke="#111" stroke-width="1.6"/><circle cx="33.5" cy="25.8" r="5.2" fill="#fff" stroke="#111" stroke-width="2"/><circle cx="48.5" cy="25.8" r="5.2" fill="#fff" stroke="#111" stroke-width="2"/><circle cx="33.5" cy="25.5" r="3" fill="#111"/><circle cx="48.5" cy="25.5" r="3" fill="#111"/><path d="M29 32.5Q33 31 37 32.5M45 32.5Q49 31 53 32.5" fill="none" stroke="#a0c8d8" stroke-width="1.4"/></g></svg>
<div class="a" style="left:0;top:0;width:2706px;height:1522px;background:rgba(0,0,0,.45)"></div>
<div class="a" style="left:1627px;top:706px;width:582px;height:497px;border-radius:18px;background:#fff;overflow:hidden">
<div class="a" style="left:6px;top:382.4px;width:256px;height:54.4px;background:#dcd8fa"></div>
<div class="a" style="left:6px;top:435.8px;width:580px;height:2px;background:#ececf0"></div>
<div class="t num" style="left:70px;top:397.6px;width:171px;text-align:right;font-size:22px;line-height:24px">169</div>
<div class="t num" style="left:270px;top:397.6px;width:170px;text-align:right;font-size:22px;line-height:24px">59</div>
<div class="a" style="left:459px;top:382.4px;width:2px;height:54.4px;background:#ececf0"></div>
<div class="a" style="left:260px;top:382.4px;width:2px;height:54.4px;background:#ececf0"></div>
<div class="a" style="left:6px;top:436.8px;width:256px;height:54.4px;background:#dcd8fa"></div>
<div class="a" style="left:6px;top:490.2px;width:580px;height:2px;background:#ececf0"></div>
<div class="t num" style="left:70px;top:452.0px;width:171px;text-align:right;font-size:22px;line-height:24px">150</div>
<div class="t num" style="left:270px;top:452.0px;width:170px;text-align:right;font-size:22px;line-height:24px">60</div>
<div class="a" style="left:459px;top:436.8px;width:2px;height:54.4px;background:#ececf0"></div>
<div class="a" style="left:260px;top:436.8px;width:2px;height:54.4px;background:#ececf0"></div>
<div class="a" style="left:6px;top:0;width:572px;height:379px;background:#fff;box-shadow:0 3px 6px rgba(0,0,0,.04)"></div>
<div class="a" style="left:3px;top:0;width:3px;height:379px;background:linear-gradient(90deg,#f6f7fb,#e9e9ef)"></div>
<div class="t" style="left:48px;top:18px;font-size:22px;line-height:24px;-webkit-text-stroke-width:0.1px;color:#8c8c8c">数值格式</div>
<div class="t" style="left:217px;top:18px;font-size:22px;line-height:24px;-webkit-text-stroke-width:0.1px;color:#8c8c8c">精度</div>
<div class="a" style="left:47px;top:59px;width:150px;height:68px;border-radius:7px;background:#f5f6fa"></div>
<div class="t" style="left:63px;top:81px;font-size:22px;line-height:24px;color:#262626">数字</div>
<svg style="left:153px;top:86px" width="19" height="12" viewBox="0 0 19 12"><path d="M2 2l7.5 7.5L17 2" fill="none" stroke="#8c8c8c" stroke-width="3.2" stroke-linecap="round" stroke-linejoin="round"/></svg>
<div class="a" style="left:217px;top:59px;width:177px;height:68px;border-radius:7px;background:#f5f6fa;border:2px solid #7566cc"></div>
<div class="t num" style="left:235px;top:81px;font-size:22px;line-height:24px;color:#262626">1</div>
<svg style="left:349px;top:86px" width="19" height="12" viewBox="0 0 19 12"><path d="M2 10l7.5-7.5L17 10" fill="none" stroke="#8c8c8c" stroke-width="3.2" stroke-linecap="round" stroke-linejoin="round"/></svg>
<div class="a" style="left:47px;top:167px;width:490px;height:2px;background:#ececf0"></div>
<div class="a" style="left:48px;top:202px;width:23px;height:23px;border:3px solid #a0a0a0;border-radius:4px"></div>
<div class="t" style="left:79px;top:201px;font-size:23px;line-height:26px;color:#6a6a6a;-webkit-text-stroke-width:0.15px">设置为收集表必填项</div>
<div class="t" style="left:354px;top:301px;font-size:21px;line-height:24px;color:#595959">取消</div>
<div class="a" style="left:441px;top:286px;width:96px;height:53px;border-radius:6px;background:#7868e0"></div>
<div class="t" style="left:467px;top:300px;font-size:21px;line-height:24px;color:#fff">确定</div>
<div class="a" style="left:217px;top:133px;width:172px;height:354px;border-radius:8px;background:#fcfcfd;box-shadow:0 2px 10px rgba(0,0,0,.08)"></div>
<div class="t dd" style="left:246px;top:162px;font-size:22px;line-height:24px;color:#7566c4">1</div>
<div class="t dd" style="left:246px;top:230px;font-size:22px;line-height:24px;color:#262626">1.0</div>
<div class="t dd" style="left:246px;top:298px;font-size:22px;line-height:24px;color:#262626">1.00</div>
<div class="t dd" style="left:246px;top:366px;font-size:22px;line-height:24px;color:#262626">1.000</div>
<div class="t dd" style="left:246px;top:434px;font-size:22px;line-height:24px;color:#262626">1.0000</div>
</div>
</body></html>
